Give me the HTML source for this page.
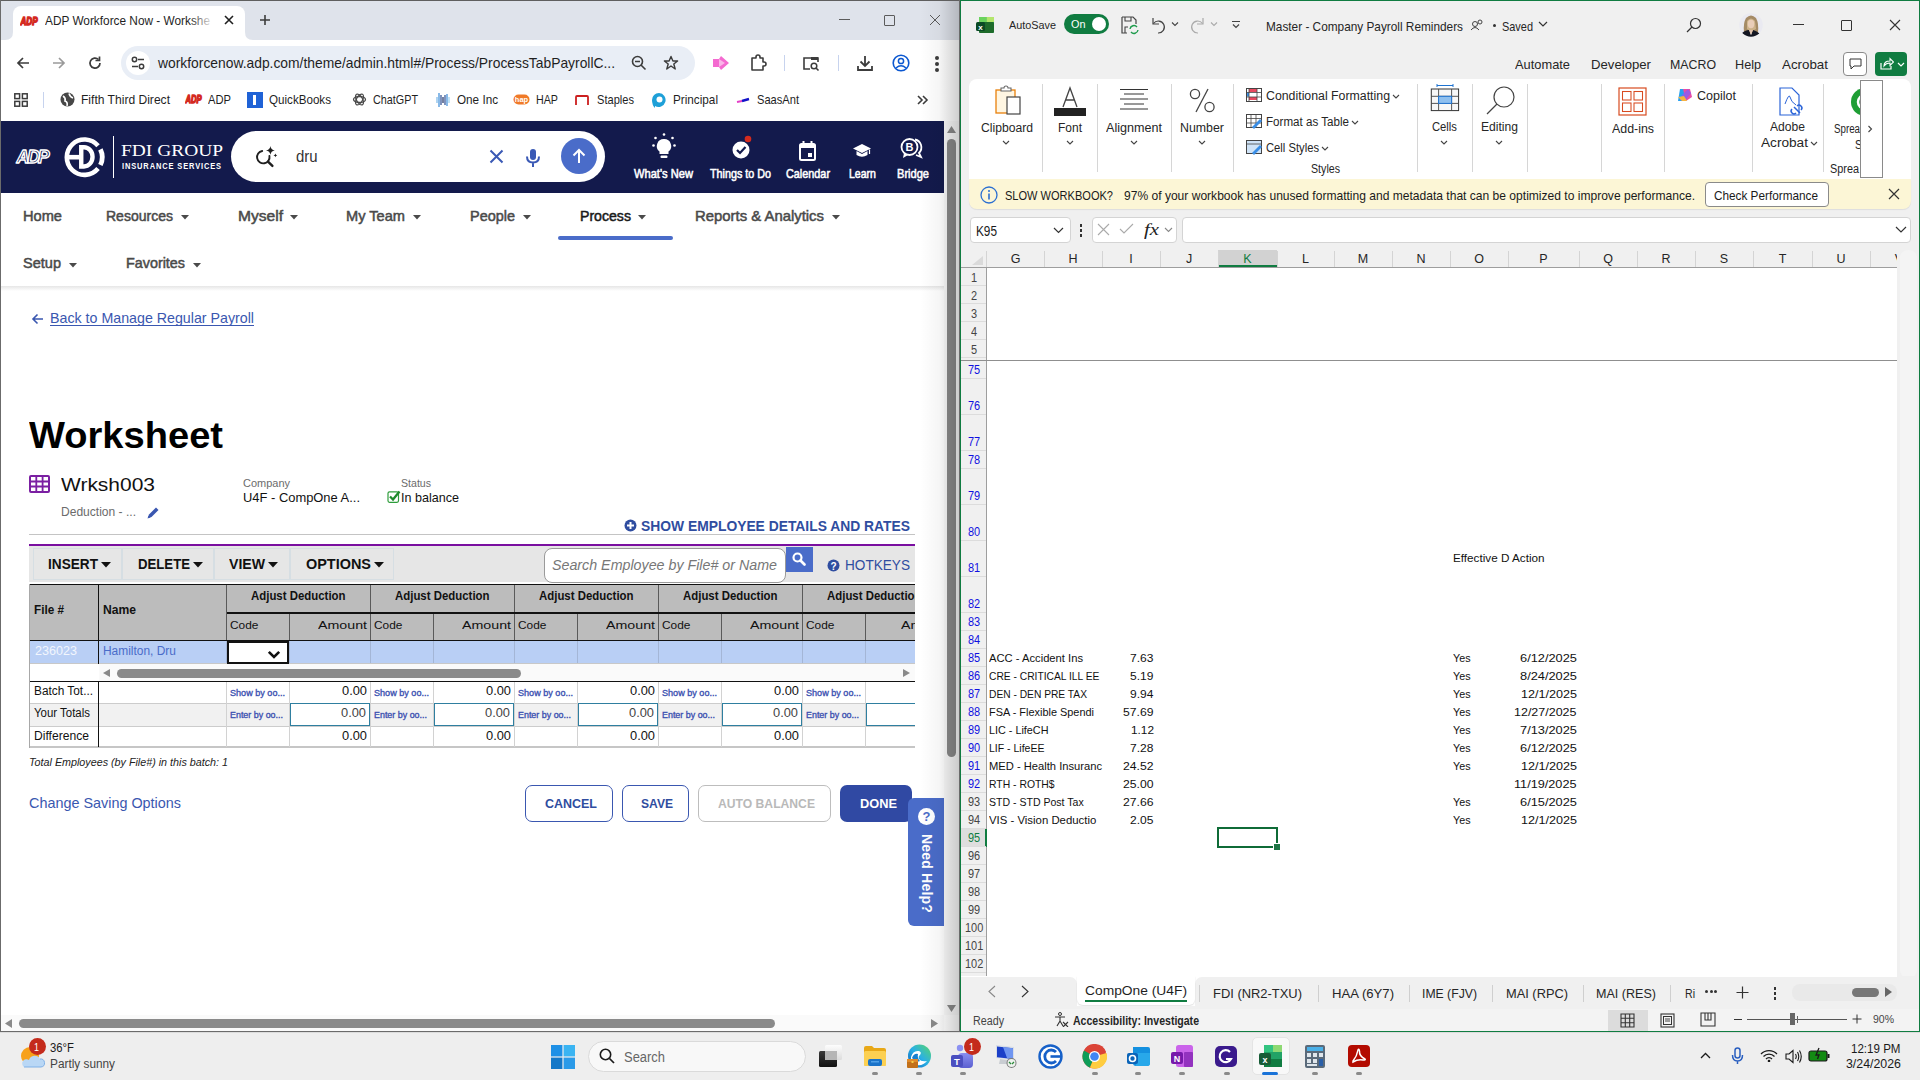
<!DOCTYPE html><html><head><meta charset="utf-8"><style>*{margin:0;padding:0;box-sizing:border-box}
html,body{width:1920px;height:1080px;overflow:hidden;background:#eeeeee;font-family:'Liberation Sans',sans-serif}
.t{position:absolute;white-space:nowrap;line-height:1;transform-origin:0 0}
.b{position:absolute}
</style></head><body><div class="b" style="left:0px;top:0px;width:960px;height:1032px;background:#fff;"></div><div class="b" style="left:0px;top:0px;width:960px;height:40px;background:#dfe3eb;"></div><div class="b" style="left:13px;top:6px;width:232px;height:34px;background:#fff;border-radius:8px 8px 0 0;"></div><svg class="b" style="left:5px;top:32px;" width="8" height="8" viewBox="0 0 8 8"><path d="M0 8 Q8 8 8 0 L8 8 Z" fill="#fff"/></svg><svg class="b" style="left:245px;top:32px;" width="8" height="8" viewBox="0 0 8 8"><path d="M8 8 Q0 8 0 0 L0 8 Z" fill="#fff"/></svg><div class="b" style="left:0px;top:40px;width:960px;height:81px;background:#fff;"></div><div class="b" style="left:121px;top:46px;width:574px;height:34px;background:#e9eef6;border-radius:17px;"></div><div class="b" style="left:126px;top:51px;width:24px;height:24px;background:#fff;border-radius:12px;"></div><svg class="b" style="left:20px;top:14px;" width="19" height="12" viewBox="0 0 19 12"><text x="0.5" y="10.5" font-size="11.5" font-weight="700" font-style="italic" font-family="Liberation Sans" fill="#fff" stroke="#d42a1f" stroke-width="1.6" stroke-linejoin="round" textLength="17" lengthAdjust="spacingAndGlyphs">ADP</text></svg><div class="t" style="left:45.00px;top:13.95px;font-size:13.00px;color:#1f1f1f;transform:scaleX(0.9100);">ADP Workforce Now - Workshe</div><div class="b" style="left:190px;top:10px;width:30px;height:20px;background:linear-gradient(90deg,rgba(255,255,255,0),#fff 80%);"></div><svg class="b" style="left:223px;top:14px;" width="12" height="12" viewBox="0 0 12 12"><path d="M2 2L10 10M10 2L2 10" stroke="#1f1f1f" stroke-width="1.6"/></svg><svg class="b" style="left:259px;top:14px;" width="12" height="12" viewBox="0 0 12 12"><path d="M6 1V11M1 6H11" stroke="#3c3c3c" stroke-width="1.6"/></svg><div class="b" style="left:839px;top:19px;width:11px;height:1px;background:#5b5b5b;"></div><div class="b" style="left:884px;top:15px;width:11px;height:11px;border:1px solid #5b5b5b;border-radius:1px;"></div><svg class="b" style="left:929px;top:14px;" width="12" height="12" viewBox="0 0 12 12"><path d="M1 1L11 11M11 1L1 11" stroke="#5b5b5b" stroke-width="1"/></svg><svg class="b" style="left:16px;top:56px;" width="14" height="14" viewBox="0 0 14 14"><path d="M13 7H2M7 2L2 7L7 12" stroke="#3c3c3c" stroke-width="1.7" fill="none"/></svg><svg class="b" style="left:52px;top:56px;" width="14" height="14" viewBox="0 0 14 14"><path d="M1 7H12M7 2L12 7L7 12" stroke="#9a9a9a" stroke-width="1.7" fill="none"/></svg><svg class="b" style="left:88px;top:56px;" width="14" height="14" viewBox="0 0 14 14"><path d="M12 7A5 5 0 1 1 10.5 3.5" stroke="#3c3c3c" stroke-width="1.7" fill="none"/><path d="M11.5 0.5V4.5H7.5" stroke="#3c3c3c" stroke-width="1.7" fill="none"/></svg><svg class="b" style="left:131px;top:56px;" width="14" height="14" viewBox="0 0 14 14"><circle cx="3.5" cy="3.5" r="2.2" stroke="#3c3c3c" stroke-width="1.5" fill="none"/><path d="M7 3.5H13M1 10.5H7" stroke="#3c3c3c" stroke-width="1.5"/><circle cx="10.5" cy="10.5" r="2.2" stroke="#3c3c3c" stroke-width="1.5" fill="none"/></svg><div class="t" style="left:158.00px;top:55.67px;font-size:14.50px;color:#1f1f1f;transform:scaleX(0.9547);">workforcenow.adp.com/theme/admin.html#/Process/ProcessTabPayrollC...</div><svg class="b" style="left:631px;top:55px;" width="16" height="16" viewBox="0 0 16 16"><circle cx="6.5" cy="6.5" r="5" stroke="#3c3c3c" stroke-width="1.6" fill="none"/><path d="M10 10L14.5 14.5M4 6.5H9" stroke="#3c3c3c" stroke-width="1.6"/></svg><svg class="b" style="left:663px;top:55px;" width="16" height="16" viewBox="0 0 16 16"><path d="M8 1.5L9.9 6H14.6L10.8 9L12.2 14L8 11L3.8 14L5.2 9L1.4 6H6.1Z" stroke="#3c3c3c" stroke-width="1.4" fill="none" stroke-linejoin="round"/></svg><svg class="b" style="left:712px;top:55px;" width="18" height="16" viewBox="0 0 18 16"><path d="M1 4H7L9 1L17 8L9 15L7 12H1Z" fill="#f46ad0"/><path d="M7 4L13 8L7 12Z" fill="#fff" opacity="0.5"/></svg><svg class="b" style="left:749px;top:54px;" width="18" height="18" viewBox="0 0 18 18"><path d="M3 4H7V3A2 2 0 0 1 11 3V4H14V8H15A2 2 0 0 1 15 12H14V16H3Z" stroke="#3c3c3c" stroke-width="1.6" fill="none" stroke-linejoin="round"/></svg><div class="b" style="left:784px;top:55px;width:1px;height:16px;background:#c7d3ee;"></div><svg class="b" style="left:802px;top:55px;" width="18" height="17" viewBox="0 0 18 17"><path d="M8 14H2V3H16V7" stroke="#3c3c3c" stroke-width="1.6" fill="none"/><rect x="9" y="2" width="7" height="3" fill="#3c3c3c"/><circle cx="12" cy="11" r="2.8" stroke="#3c3c3c" stroke-width="1.5" fill="none"/><path d="M14 13L16.5 15.5" stroke="#3c3c3c" stroke-width="1.6"/></svg><div class="b" style="left:838px;top:55px;width:1px;height:16px;background:#c7d3ee;"></div><svg class="b" style="left:856px;top:54px;" width="18" height="18" viewBox="0 0 18 18"><path d="M9 2V12M4.5 7.5L9 12L13.5 7.5M2 12V16H16V12" stroke="#3c3c3c" stroke-width="1.8" fill="none"/></svg><svg class="b" style="left:892px;top:54px;" width="18" height="18" viewBox="0 0 18 18"><circle cx="9" cy="9" r="7.8" stroke="#0b57d0" stroke-width="1.6" fill="none"/><circle cx="9" cy="7" r="2.6" stroke="#0b57d0" stroke-width="1.5" fill="none"/><path d="M4 14Q9 9.5 14 14" stroke="#0b57d0" stroke-width="1.5" fill="none"/></svg><div class="b" style="left:935px;top:56px;width:4px;height:4px;background:#3c3c3c;border-radius:2px;"></div><div class="b" style="left:935px;top:62px;width:4px;height:4px;background:#3c3c3c;border-radius:2px;"></div><div class="b" style="left:935px;top:68px;width:4px;height:4px;background:#3c3c3c;border-radius:2px;"></div><svg class="b" style="left:14px;top:93px;" width="14" height="14" viewBox="0 0 14 14"><rect x="0.8" y="0.8" width="4.8" height="4.8" stroke="#3c3c3c" stroke-width="1.5" fill="none"/><rect x="8.4" y="0.8" width="4.8" height="4.8" stroke="#3c3c3c" stroke-width="1.5" fill="none"/><rect x="0.8" y="8.4" width="4.8" height="4.8" stroke="#3c3c3c" stroke-width="1.5" fill="none"/><rect x="8.4" y="8.4" width="4.8" height="4.8" stroke="#3c3c3c" stroke-width="1.5" fill="none"/></svg><div class="b" style="left:43px;top:92px;width:1px;height:16px;background:#c7d3ee;"></div><svg class="b" style="left:60px;top:92px;" width="15" height="15" viewBox="0 0 15 15"><circle cx="7.5" cy="7.5" r="7" fill="#474747"/><path d="M3 4Q6 6 5 9Q8 10 7 14" stroke="#fff" stroke-width="1.6" fill="none"/><path d="M9 1.5Q10 5 13 6" stroke="#fff" stroke-width="1.6" fill="none"/></svg><div class="t" style="left:81.00px;top:93.15px;font-size:13.00px;color:#1f1f1f;transform:scaleX(0.9286);">Fifth Third Direct</div><svg class="b" style="left:185px;top:93px;" width="18" height="12" viewBox="0 0 18 12"><text x="0.5" y="10" font-size="10.5" font-weight="700" font-style="italic" font-family="Liberation Sans" fill="#fff" stroke="#d42a1f" stroke-width="1.5" stroke-linejoin="round" textLength="16" lengthAdjust="spacingAndGlyphs">ADP</text></svg><div class="t" style="left:208.00px;top:93.15px;font-size:13.00px;color:#1f1f1f;transform:scaleX(0.8603);">ADP</div><div class="b" style="left:247px;top:92px;width:16px;height:16px;background:#1f62d6;"></div><div class="b" style="left:253px;top:95px;width:3px;height:10px;background:#fff;"></div><div class="t" style="left:269.00px;top:93.15px;font-size:13.00px;color:#1f1f1f;transform:scaleX(0.8937);">QuickBooks</div><svg class="b" style="left:352px;top:92px;" width="15" height="15" viewBox="0 0 15 15"><g stroke="#4a4a4a" stroke-width="1.3" fill="none"><ellipse cx="7.5" cy="7.5" rx="6" ry="3"/><ellipse cx="7.5" cy="7.5" rx="6" ry="3" transform="rotate(60 7.5 7.5)"/><ellipse cx="7.5" cy="7.5" rx="6" ry="3" transform="rotate(120 7.5 7.5)"/></g></svg><div class="t" style="left:373.00px;top:93.15px;font-size:13.00px;color:#1f1f1f;transform:scaleX(0.8304);">ChatGPT</div><svg class="b" style="left:435px;top:91px;" width="16" height="18" viewBox="0 0 16 18"><g stroke-width="1.2"><path d="M2 6V12" stroke="#7ab8e8"/><path d="M4 2V16" stroke="#3a8ad8"/><path d="M6 4V14" stroke="#2a4a90"/><path d="M8 6V12" stroke="#1a2a60"/><path d="M10 4V14" stroke="#2a4a90"/><path d="M12 3V15" stroke="#3a8ad8"/><path d="M14 6V12" stroke="#9ad0f0"/></g></svg><div class="t" style="left:457.00px;top:93.15px;font-size:13.00px;color:#1f1f1f;transform:scaleX(0.9005);">One Inc</div><svg class="b" style="left:513px;top:94px;" width="17" height="11" viewBox="0 0 17 11"><rect x="0.5" y="0.5" width="16" height="10" rx="5" fill="#f07a28"/><text x="8.5" y="8" font-size="7.5" font-weight="700" text-anchor="middle" fill="#fff" font-family="Liberation Sans">hap</text></svg><div class="t" style="left:536.00px;top:93.15px;font-size:13.00px;color:#1f1f1f;transform:scaleX(0.8229);">HAP</div><svg class="b" style="left:574px;top:94px;" width="16" height="12" viewBox="0 0 16 12"><path d="M2 11V3Q2 2 3 2H13Q14 2 14 3V11" stroke="#cc1f1f" stroke-width="1.8" fill="none"/></svg><div class="t" style="left:597.00px;top:93.15px;font-size:13.00px;color:#1f1f1f;transform:scaleX(0.8530);">Staples</div><svg class="b" style="left:651px;top:92px;" width="16" height="17" viewBox="0 0 16 17"><path d="M8 1A7 7 0 1 1 4 14V16Q1 13 1 8A7 7 0 0 1 8 1Z" fill="#1ea0d8"/><circle cx="8.5" cy="7.5" r="3" fill="#fff"/></svg><div class="t" style="left:673.00px;top:93.15px;font-size:13.00px;color:#1f1f1f;transform:scaleX(0.9025);">Principal</div><svg class="b" style="left:736px;top:95px;" width="14" height="8" viewBox="0 0 14 8"><path d="M1 7L6 6" stroke="#e33fc7" stroke-width="2"/><path d="M6 6L13 4" stroke="#1212c8" stroke-width="2.4"/></svg><div class="t" style="left:757.00px;top:93.15px;font-size:13.00px;color:#1f1f1f;transform:scaleX(0.8544);">SaasAnt</div><svg class="b" style="left:916px;top:94px;" width="14" height="12" viewBox="0 0 14 12"><path d="M2 2L6 6L2 10M7 2L11 6L7 10" stroke="#3c3c3c" stroke-width="1.6" fill="none"/></svg><div class="b" style="left:1px;top:121px;width:943px;height:72px;background:#131a4c;"></div><svg class="b" style="left:15px;top:146px;" width="36" height="20" viewBox="0 0 36 20"><text x="1.5" y="17.3" font-size="19" font-weight="700" font-style="italic" font-family="Liberation Sans" fill="#131a4c" stroke="#fff" stroke-width="1.5" stroke-linejoin="round" letter-spacing="-2.2" textLength="31" lengthAdjust="spacingAndGlyphs">ADP</text></svg><svg class="b" style="left:63px;top:135px;" width="46" height="46" viewBox="0 0 46 46"><path d="M35.06 10.82A17.7 17.7 0 1 0 35.06 33.58" stroke="#fff" stroke-width="4.6" fill="none"/><path d="M37.4 14.4A17.7 17.7 0 0 1 37.4 30" stroke="#fff" stroke-width="4.8" fill="none"/><path d="M6 22.2H20" stroke="#fff" stroke-width="4.6"/><path d="M18.25 12.25H21A8.55 9.6 0 0 1 21 31.45H18.25Z" stroke="#fff" stroke-width="4.4" fill="none"/></svg><div class="b" style="left:113px;top:136px;width:1px;height:42px;background:#fff;"></div><div class="t" style="left:121.00px;top:142.47px;font-size:17.50px;color:#fff;font-family:'Liberation Serif',serif;transform:scaleX(1.1098);">FDI GROUP</div><div class="t" style="left:122.00px;top:162.28px;font-size:8.50px;color:#fff;font-weight:700;letter-spacing:1px;transform:scaleX(0.8792);">INSURANCE SERVICES</div><div class="b" style="left:231px;top:131px;width:374px;height:51px;background:#fff;border-radius:26px;"></div><svg class="b" style="left:255px;top:146px;" width="24" height="23" viewBox="0 0 24 23"><path d="M7.2 4.95A6.25 6.25 0 1 0 14.45 10" stroke="#1f1f1f" stroke-width="1.9" fill="none" stroke-linecap="round"/><path d="M13 15.6L17.4 19.9" stroke="#1f1f1f" stroke-width="2.4" stroke-linecap="round"/><path d="M15.4 0Q15.9 3.9 19.8 4.4Q15.9 4.9 15.4 8.8Q14.9 4.9 11 4.4Q14.9 3.9 15.4 0Z" fill="#1f1f1f"/><path d="M20.4 7.5Q20.6 9.2 22.3 9.4Q20.6 9.6 20.4 11.3Q20.2 9.6 18.5 9.4Q20.2 9.2 20.4 7.5Z" fill="#1f1f1f"/></svg><div class="t" style="left:296.30px;top:148.82px;font-size:16.80px;color:#333;transform:scaleX(0.8901);">dru</div><svg class="b" style="left:489px;top:149px;" width="15" height="15" viewBox="0 0 15 15"><path d="M1.5 1.5L13.5 13.5M13.5 1.5L1.5 13.5" stroke="#3a59b5" stroke-width="2"/></svg><svg class="b" style="left:525px;top:148px;" width="16" height="20" viewBox="0 0 16 20"><rect x="5" y="1" width="6" height="11" rx="3" fill="#3a59b5"/><path d="M2 8.5Q2 14.5 8 14.5Q14 14.5 14 8.5M8 14.5V19" stroke="#3a59b5" stroke-width="2" fill="none"/></svg><div class="b" style="left:561px;top:138px;width:36px;height:36px;background:#4a6cc9;border-radius:18px;"></div><svg class="b" style="left:570px;top:147px;" width="18" height="18" viewBox="0 0 18 18"><path d="M9 16V3M3.5 8.5L9 3L14.5 8.5" stroke="#fff" stroke-width="2" fill="none"/></svg><svg class="b" style="left:652px;top:133px;" width="24" height="27" viewBox="0 0 24 27"><path d="M12 6A7 7 0 0 0 7.5 18.5V21H16.5V18.5A7 7 0 0 0 12 6Z" fill="#fff"/><rect x="8.5" y="22.5" width="7" height="2.5" rx="1" fill="#fff"/><circle cx="12" cy="1.5" r="1.3" fill="#fff"/><circle cx="3.5" cy="5" r="1.3" fill="#fff"/><circle cx="20.5" cy="5" r="1.3" fill="#fff"/><circle cx="1.5" cy="12.5" r="1.3" fill="#fff"/><circle cx="22.5" cy="12.5" r="1.3" fill="#fff"/></svg><svg class="b" style="left:731px;top:135px;" width="22" height="24" viewBox="0 0 22 24"><circle cx="10" cy="15" r="8.5" fill="#fff"/><path d="M6 15L9 18L14.5 12" stroke="#131a4c" stroke-width="2.2" fill="none"/><circle cx="17" cy="4" r="3.3" fill="#d42b1e"/></svg><svg class="b" style="left:799px;top:141px;" width="17" height="20" viewBox="0 0 17 20"><rect x="1" y="3" width="15" height="16" rx="1.5" stroke="#fff" stroke-width="2" fill="none"/><rect x="1" y="3" width="15" height="4" fill="#fff"/><path d="M4.5 0V4M12.5 0V4" stroke="#fff" stroke-width="2"/><rect x="9" y="12" width="4" height="4" fill="#fff"/></svg><svg class="b" style="left:853px;top:143px;" width="18" height="15" viewBox="0 0 18 15"><path d="M9 1L18 5.5L9 10L0 5.5Z" fill="#fff"/><path d="M3.5 8V12Q9 15.5 14.5 12V8L9 11Z" fill="#fff"/><path d="M16.5 6.5V11" stroke="#fff" stroke-width="1.2"/></svg><svg class="b" style="left:900px;top:137px;" width="24" height="24" viewBox="0 0 24 24"><circle cx="9.5" cy="10" r="8" stroke="#fff" stroke-width="1.8" fill="none"/><path d="M4 16L3 21L8 18" fill="#fff"/><path d="M15 2.5A8 8 0 0 1 19 16L21 20L16 18" stroke="#fff" stroke-width="1.8" fill="none"/><text x="9.5" y="14" font-size="11" font-weight="700" text-anchor="middle" fill="#fff" font-family="Liberation Sans">B</text></svg><div class="t" style="left:634.00px;top:167.88px;font-size:12.50px;color:#fff;-webkit-text-stroke:0.55px #fff;transform:scaleX(0.8899);">What&#x27;s New</div><div class="t" style="left:710.00px;top:168.38px;font-size:12.50px;color:#fff;-webkit-text-stroke:0.55px #fff;transform:scaleX(0.8607);">Things to Do</div><div class="t" style="left:786.00px;top:168.38px;font-size:12.50px;color:#fff;-webkit-text-stroke:0.55px #fff;transform:scaleX(0.8673);">Calendar</div><div class="t" style="left:849.00px;top:168.38px;font-size:12.50px;color:#fff;-webkit-text-stroke:0.55px #fff;transform:scaleX(0.8442);">Learn</div><div class="t" style="left:897.00px;top:168.38px;font-size:12.50px;color:#fff;-webkit-text-stroke:0.55px #fff;transform:scaleX(0.8854);">Bridge</div><div class="t" style="left:23.00px;top:208.68px;font-size:14.50px;color:#4a4a4a;-webkit-text-stroke:0.5px #4a4a4a;transform:scaleX(1.0081);">Home</div><div class="t" style="left:106.00px;top:208.68px;font-size:14.50px;color:#4a4a4a;-webkit-text-stroke:0.5px #4a4a4a;transform:scaleX(0.9666);">Resources</div><svg class="b" style="left:181px;top:215px;" width="8" height="5" viewBox="0 0 8 5"><path d="M0 0H8L4 4.5Z" fill="#4a4a4a"/></svg><div class="t" style="left:238.00px;top:208.68px;font-size:14.50px;color:#4a4a4a;-webkit-text-stroke:0.5px #4a4a4a;transform:scaleX(1.0738);">Myself</div><svg class="b" style="left:290px;top:215px;" width="8" height="5" viewBox="0 0 8 5"><path d="M0 0H8L4 4.5Z" fill="#4a4a4a"/></svg><div class="t" style="left:346.00px;top:208.68px;font-size:14.50px;color:#4a4a4a;-webkit-text-stroke:0.5px #4a4a4a;transform:scaleX(1.0075);">My Team</div><svg class="b" style="left:413px;top:215px;" width="8" height="5" viewBox="0 0 8 5"><path d="M0 0H8L4 4.5Z" fill="#4a4a4a"/></svg><div class="t" style="left:470.00px;top:208.68px;font-size:14.50px;color:#4a4a4a;-webkit-text-stroke:0.5px #4a4a4a;transform:scaleX(0.9965);">People</div><svg class="b" style="left:523px;top:215px;" width="8" height="5" viewBox="0 0 8 5"><path d="M0 0H8L4 4.5Z" fill="#4a4a4a"/></svg><div class="t" style="left:580.00px;top:208.68px;font-size:14.50px;color:#1a1a1a;-webkit-text-stroke:0.5px #1a1a1a;transform:scaleX(0.9735);">Process</div><svg class="b" style="left:638px;top:215px;" width="8" height="5" viewBox="0 0 8 5"><path d="M0 0H8L4 4.5Z" fill="#4a4a4a"/></svg><div class="b" style="left:558px;top:236px;width:115px;height:4px;background:#4a6cc9;border-radius:2px;"></div><div class="t" style="left:695.00px;top:208.68px;font-size:14.50px;color:#4a4a4a;-webkit-text-stroke:0.5px #4a4a4a;transform:scaleX(1.0260);">Reports &amp; Analytics</div><svg class="b" style="left:832px;top:215px;" width="8" height="5" viewBox="0 0 8 5"><path d="M0 0H8L4 4.5Z" fill="#4a4a4a"/></svg><div class="t" style="left:23.00px;top:255.98px;font-size:14.50px;color:#4a4a4a;-webkit-text-stroke:0.5px #4a4a4a;transform:scaleX(1.0025);">Setup</div><svg class="b" style="left:69px;top:263px;" width="8" height="5" viewBox="0 0 8 5"><path d="M0 0H8L4 4.5Z" fill="#4a4a4a"/></svg><div class="t" style="left:126.00px;top:255.98px;font-size:14.50px;color:#4a4a4a;-webkit-text-stroke:0.5px #4a4a4a;transform:scaleX(0.9893);">Favorites</div><svg class="b" style="left:193px;top:263px;" width="8" height="5" viewBox="0 0 8 5"><path d="M0 0H8L4 4.5Z" fill="#4a4a4a"/></svg><div class="b" style="left:1px;top:286px;width:943px;height:5px;background:linear-gradient(#e6e6e6,rgba(255,255,255,0));"></div><svg class="b" style="left:31px;top:313px;" width="13" height="12" viewBox="0 0 13 12"><path d="M12 6H2M6.5 1.5L2 6L6.5 10.5" stroke="#3a57b0" stroke-width="1.6" fill="none"/></svg><div class="t" style="left:50.00px;top:311.28px;font-size:14.50px;color:#3a57b0;transform:scaleX(0.9810);">Back to Manage Regular Payroll</div><div class="b" style="left:50px;top:325px;width:204px;height:1px;background:#3a57b0;"></div><div class="t" style="left:29.00px;top:417.43px;font-size:37.50px;color:#000;font-weight:700;transform:scaleX(1.0155);">Worksheet</div><svg class="b" style="left:29px;top:475px;" width="21" height="18" viewBox="0 0 21 18"><rect x="1" y="1" width="19" height="16" rx="1" stroke="#7b1fa2" stroke-width="2" fill="none"/><path d="M1 6.5H20M1 11.5H20M7.3 1V17M13.6 1V17" stroke="#7b1fa2" stroke-width="1.8"/></svg><div class="t" style="left:61.00px;top:474.65px;font-size:19.00px;color:#111;transform:scaleX(1.1034);">Wrksh003</div><div class="t" style="left:61.00px;top:506.38px;font-size:12.50px;color:#6b6b6b;transform:scaleX(0.9637);">Deduction - ...</div><svg class="b" style="left:146px;top:506px;" width="14" height="14" viewBox="0 0 14 14"><path d="M2 12L3 8.5L10 1.5L12.5 4L5.5 11Z" fill="#3a57b0"/><path d="M1.5 12.5L2.5 9.5L4.5 11.5Z" fill="#3a57b0"/></svg><div class="t" style="left:243.00px;top:477.85px;font-size:11.00px;color:#6b6b6b;transform:scaleX(0.9983);">Company</div><div class="t" style="left:243.00px;top:490.72px;font-size:13.50px;color:#111;transform:scaleX(0.9567);">U4F - CompOne A...</div><div class="t" style="left:401.00px;top:477.85px;font-size:11.00px;color:#6b6b6b;transform:scaleX(0.9619);">Status</div><svg class="b" style="left:387px;top:490px;" width="14" height="14" viewBox="0 0 14 14"><rect x="1" y="1.8" width="10.5" height="10.5" rx="1.5" stroke="#2e9d3b" stroke-width="1.2" fill="none"/><path d="M3 6.5L6 9.5L12.5 1.5" stroke="#1f8a2c" stroke-width="2.3" fill="none"/></svg><div class="t" style="left:401.00px;top:490.72px;font-size:13.50px;color:#111;transform:scaleX(0.9308);">In balance</div><svg class="b" style="left:624px;top:519px;" width="13" height="13" viewBox="0 0 13 13"><circle cx="6.5" cy="6.5" r="6" fill="#2f4da0"/><path d="M6.5 3V10M3 6.5H10" stroke="#fff" stroke-width="2"/></svg><div class="t" style="left:641.00px;top:519.10px;font-size:14.00px;color:#2f4da0;font-weight:700;transform:scaleX(0.9890);">SHOW EMPLOYEE DETAILS AND RATES</div><div class="b" style="left:29px;top:534px;width:886px;height:1px;background:#c4c4c4;"></div><div class="b" style="left:29px;top:544px;width:886px;height:2px;background:#7a0fa0;"></div><div class="b" style="left:29px;top:546px;width:886px;height:36px;background:#e6e6e6;"></div><div class="b" style="left:33px;top:548px;width:89px;height:32px;border:1px solid #d6dee3;"></div><div class="b" style="left:122px;top:548px;width:92px;height:32px;border:1px solid #d6dee3;"></div><div class="b" style="left:214px;top:548px;width:76px;height:32px;border:1px solid #d6dee3;"></div><div class="b" style="left:290px;top:548px;width:104px;height:32px;border:1px solid #d6dee3;"></div><div class="t" style="left:48.00px;top:557.10px;font-size:14.00px;color:#111;font-weight:700;transform:scaleX(0.9738);">INSERT</div><svg class="b" style="left:101px;top:562px;" width="10" height="6" viewBox="0 0 10 6"><path d="M0 0H10L5 5.5Z" fill="#111"/></svg><div class="t" style="left:138.00px;top:557.10px;font-size:14.00px;color:#111;font-weight:700;transform:scaleX(0.9414);">DELETE</div><svg class="b" style="left:193px;top:562px;" width="10" height="6" viewBox="0 0 10 6"><path d="M0 0H10L5 5.5Z" fill="#111"/></svg><div class="t" style="left:229.00px;top:557.10px;font-size:14.00px;color:#111;font-weight:700;transform:scaleX(1.0061);">VIEW</div><svg class="b" style="left:268px;top:562px;" width="10" height="6" viewBox="0 0 10 6"><path d="M0 0H10L5 5.5Z" fill="#111"/></svg><div class="t" style="left:306.00px;top:557.10px;font-size:14.00px;color:#111;font-weight:700;transform:scaleX(1.0315);">OPTIONS</div><svg class="b" style="left:374px;top:562px;" width="10" height="6" viewBox="0 0 10 6"><path d="M0 0H10L5 5.5Z" fill="#111"/></svg><div class="b" style="left:544px;top:548px;width:242px;height:35px;background:#fff;border:1px solid #9a9a9a;border-radius:8px;"></div><div class="t" style="left:552.00px;top:557.67px;font-size:14.50px;color:#777;font-style:italic;transform:scaleX(0.9830);">Search Employee by File# or Name</div><div class="b" style="left:786px;top:547px;width:27px;height:25px;background:#4a6cc9;"></div><svg class="b" style="left:792px;top:552px;" width="14" height="14" viewBox="0 0 14 14"><circle cx="5.5" cy="5.5" r="4" stroke="#fff" stroke-width="2.2" fill="none"/><path d="M8.5 8.5L12.5 12.5" stroke="#fff" stroke-width="2.6" stroke-linecap="round"/></svg><svg class="b" style="left:827px;top:559px;" width="13" height="13" viewBox="0 0 13 13"><circle cx="6.5" cy="6.5" r="6" fill="#2f4da0"/><text x="6.5" y="10.5" font-size="10" font-weight="700" text-anchor="middle" fill="#fff" font-family="Liberation Sans">?</text></svg><div class="t" style="left:845.00px;top:558.10px;font-size:14.00px;color:#2f4da0;transform:scaleX(0.9715);">HOTKEYS</div><div class="b" style="left:0;top:0;width:960px;height:1032px;clip-path:inset(575px 45px 280px 0)"><div class="b" style="left:30px;top:585px;width:885px;height:55px;background:#bcbcbc;"></div><div class="b" style="left:30px;top:584px;width:885px;height:1px;background:#111;"></div><div class="b" style="left:226px;top:585px;width:1px;height:55px;background:#5a5a5a;"></div><div class="b" style="left:370px;top:585px;width:1px;height:55px;background:#5a5a5a;"></div><div class="b" style="left:514px;top:585px;width:1px;height:55px;background:#5a5a5a;"></div><div class="b" style="left:658px;top:585px;width:1px;height:55px;background:#5a5a5a;"></div><div class="b" style="left:802px;top:585px;width:1px;height:55px;background:#5a5a5a;"></div><div class="b" style="left:227px;top:612px;width:688px;height:2px;background:#111;"></div><div class="b" style="left:289px;top:614px;width:1px;height:26px;background:#5a5a5a;"></div><div class="b" style="left:433px;top:614px;width:1px;height:26px;background:#5a5a5a;"></div><div class="b" style="left:577px;top:614px;width:1px;height:26px;background:#5a5a5a;"></div><div class="b" style="left:721px;top:614px;width:1px;height:26px;background:#5a5a5a;"></div><div class="b" style="left:865px;top:614px;width:1px;height:26px;background:#5a5a5a;"></div><div class="b" style="left:30px;top:640px;width:885px;height:1px;background:#111;"></div><div class="t" style="left:34.00px;top:603.98px;font-size:12.50px;color:#111;font-weight:700;transform:scaleX(0.9384);">File #</div><div class="t" style="left:103.00px;top:603.98px;font-size:12.50px;color:#111;font-weight:700;transform:scaleX(0.9693);">Name</div><div class="t" style="left:251.00px;top:588.95px;font-size:13.00px;color:#111;font-weight:700;transform:scaleX(0.8782);">Adjust Deduction</div><div class="t" style="left:229.60px;top:619.52px;font-size:11.50px;color:#111;transform:scaleX(1.0327);">Code</div><div class="t" style="left:366.80px;top:619.52px;font-size:11.50px;color:#111;transform:scaleX(1.2361);left:317.80px;">Amount</div><div class="t" style="left:395.00px;top:588.95px;font-size:13.00px;color:#111;font-weight:700;transform:scaleX(0.8782);">Adjust Deduction</div><div class="t" style="left:373.60px;top:619.52px;font-size:11.50px;color:#111;transform:scaleX(1.0327);">Code</div><div class="t" style="left:510.80px;top:619.52px;font-size:11.50px;color:#111;transform:scaleX(1.2361);left:461.80px;">Amount</div><div class="t" style="left:539.00px;top:588.95px;font-size:13.00px;color:#111;font-weight:700;transform:scaleX(0.8782);">Adjust Deduction</div><div class="t" style="left:517.60px;top:619.52px;font-size:11.50px;color:#111;transform:scaleX(1.0327);">Code</div><div class="t" style="left:654.80px;top:619.52px;font-size:11.50px;color:#111;transform:scaleX(1.2361);left:605.80px;">Amount</div><div class="t" style="left:683.00px;top:588.95px;font-size:13.00px;color:#111;font-weight:700;transform:scaleX(0.8782);">Adjust Deduction</div><div class="t" style="left:661.60px;top:619.52px;font-size:11.50px;color:#111;transform:scaleX(1.0327);">Code</div><div class="t" style="left:798.80px;top:619.52px;font-size:11.50px;color:#111;transform:scaleX(1.2361);left:749.80px;">Amount</div><div class="t" style="left:827.00px;top:588.95px;font-size:13.00px;color:#111;font-weight:700;transform:scaleX(0.8782);">Adjust Deduction</div><div class="t" style="left:805.60px;top:619.52px;font-size:11.50px;color:#111;transform:scaleX(1.0327);">Code</div><div class="t" style="left:950.00px;top:619.52px;font-size:11.50px;color:#111;transform:scaleX(1.2361);left:901.00px;">Amount</div><div class="b" style="left:30px;top:641px;width:885px;height:23px;background:#b9cff5;"></div><div class="b" style="left:226px;top:641px;width:1px;height:23px;background:#a4b6d6;"></div><div class="b" style="left:289px;top:641px;width:1px;height:23px;background:#a4b6d6;"></div><div class="b" style="left:370px;top:641px;width:1px;height:23px;background:#a4b6d6;"></div><div class="b" style="left:433px;top:641px;width:1px;height:23px;background:#a4b6d6;"></div><div class="b" style="left:514px;top:641px;width:1px;height:23px;background:#a4b6d6;"></div><div class="b" style="left:577px;top:641px;width:1px;height:23px;background:#a4b6d6;"></div><div class="b" style="left:658px;top:641px;width:1px;height:23px;background:#a4b6d6;"></div><div class="b" style="left:721px;top:641px;width:1px;height:23px;background:#a4b6d6;"></div><div class="b" style="left:802px;top:641px;width:1px;height:23px;background:#a4b6d6;"></div><div class="b" style="left:865px;top:641px;width:1px;height:23px;background:#a4b6d6;"></div><div class="b" style="left:30px;top:663px;width:885px;height:1px;background:#c8c8c8;"></div><div class="t" style="left:35.00px;top:645.17px;font-size:12.50px;color:#f2f6fd;transform:scaleX(1.0067);">236023</div><div class="t" style="left:103.00px;top:645.17px;font-size:12.50px;color:#4a6cc9;transform:scaleX(0.9552);">Hamilton, Dru</div><div class="b" style="left:227px;top:641px;width:62px;height:23px;background:#fff;border:2px solid #111;"></div><svg class="b" style="left:267px;top:650px;" width="14" height="9" viewBox="0 0 14 9"><path d="M1.8 1.8L7 7L12.2 1.8" stroke="#111" stroke-width="2.6" fill="none"/></svg><div class="b" style="left:30px;top:664px;width:885px;height:17px;background:#fafafa;"></div><div class="b" style="left:30px;top:664px;width:69px;height:17px;background:#fff;"></div><svg class="b" style="left:103px;top:669px;" width="7" height="8" viewBox="0 0 7 8"><path d="M7 0V8L0 4Z" fill="#8a8a8a"/></svg><div class="b" style="left:117px;top:669px;width:404px;height:8.5px;background:#8a8a8a;border-radius:4.5px;"></div><svg class="b" style="left:903px;top:669px;" width="7" height="8" viewBox="0 0 7 8"><path d="M0 0V8L7 4Z" fill="#8a8a8a"/></svg><div class="b" style="left:30px;top:681px;width:885px;height:1px;background:#111;"></div><div class="b" style="left:30px;top:682px;width:885px;height:65px;background:#fff;"></div><div class="b" style="left:30px;top:704px;width:885px;height:22px;background:#f1f1f1;"></div><div class="b" style="left:30px;top:703px;width:885px;height:1px;background:#cccccc;"></div><div class="b" style="left:30px;top:726px;width:885px;height:1px;background:#cccccc;"></div><div class="b" style="left:30px;top:746px;width:885px;height:2px;background:#c6c6c6;"></div><div class="b" style="left:226px;top:682px;width:1px;height:65px;background:#d2d2d2;"></div><div class="b" style="left:289px;top:682px;width:1px;height:65px;background:#d2d2d2;"></div><div class="b" style="left:370px;top:682px;width:1px;height:65px;background:#d2d2d2;"></div><div class="b" style="left:433px;top:682px;width:1px;height:65px;background:#d2d2d2;"></div><div class="b" style="left:514px;top:682px;width:1px;height:65px;background:#d2d2d2;"></div><div class="b" style="left:577px;top:682px;width:1px;height:65px;background:#d2d2d2;"></div><div class="b" style="left:658px;top:682px;width:1px;height:65px;background:#d2d2d2;"></div><div class="b" style="left:721px;top:682px;width:1px;height:65px;background:#d2d2d2;"></div><div class="b" style="left:802px;top:682px;width:1px;height:65px;background:#d2d2d2;"></div><div class="b" style="left:865px;top:682px;width:1px;height:65px;background:#d2d2d2;"></div><div class="t" style="left:34.00px;top:685.17px;font-size:12.50px;color:#111;transform:scaleX(0.9468);">Batch Tot...</div><div class="t" style="left:34.00px;top:706.88px;font-size:12.50px;color:#111;transform:scaleX(0.9155);">Your Totals</div><div class="t" style="left:34.00px;top:730.17px;font-size:12.50px;color:#111;transform:scaleX(0.9692);">Difference</div><div class="t" style="left:230.00px;top:689.53px;font-size:8.20px;color:#3a4fb0;-webkit-text-stroke:0.3px #3a4fb0;transform:scaleX(1.1087);">Show by oo...</div><div class="t" style="left:230.00px;top:711.53px;font-size:8.20px;color:#3a4fb0;-webkit-text-stroke:0.3px #3a4fb0;transform:scaleX(1.0882);">Enter by oo...</div><div class="t" style="left:367.00px;top:684.45px;font-size:13.00px;color:#111;transform:scaleX(0.9877);left:342.00px;">0.00</div><div class="b" style="left:290px;top:703px;width:80px;height:23px;background:#fff;border:1.5px solid #2f7fa0;"></div><div class="t" style="left:366.00px;top:706.45px;font-size:13.00px;color:#444;transform:scaleX(0.9877);left:341.00px;">0.00</div><div class="t" style="left:367.00px;top:728.95px;font-size:13.00px;color:#111;transform:scaleX(0.9877);left:342.00px;">0.00</div><div class="t" style="left:374.00px;top:689.53px;font-size:8.20px;color:#3a4fb0;-webkit-text-stroke:0.3px #3a4fb0;transform:scaleX(1.1087);">Show by oo...</div><div class="t" style="left:374.00px;top:711.53px;font-size:8.20px;color:#3a4fb0;-webkit-text-stroke:0.3px #3a4fb0;transform:scaleX(1.0882);">Enter by oo...</div><div class="t" style="left:511.00px;top:684.45px;font-size:13.00px;color:#111;transform:scaleX(0.9877);left:486.00px;">0.00</div><div class="b" style="left:434px;top:703px;width:80px;height:23px;background:#fff;border:1.5px solid #2f7fa0;"></div><div class="t" style="left:510.00px;top:706.45px;font-size:13.00px;color:#444;transform:scaleX(0.9877);left:485.00px;">0.00</div><div class="t" style="left:511.00px;top:728.95px;font-size:13.00px;color:#111;transform:scaleX(0.9877);left:486.00px;">0.00</div><div class="t" style="left:518.00px;top:689.53px;font-size:8.20px;color:#3a4fb0;-webkit-text-stroke:0.3px #3a4fb0;transform:scaleX(1.1087);">Show by oo...</div><div class="t" style="left:518.00px;top:711.53px;font-size:8.20px;color:#3a4fb0;-webkit-text-stroke:0.3px #3a4fb0;transform:scaleX(1.0882);">Enter by oo...</div><div class="t" style="left:655.00px;top:684.45px;font-size:13.00px;color:#111;transform:scaleX(0.9877);left:630.00px;">0.00</div><div class="b" style="left:578px;top:703px;width:80px;height:23px;background:#fff;border:1.5px solid #2f7fa0;"></div><div class="t" style="left:654.00px;top:706.45px;font-size:13.00px;color:#444;transform:scaleX(0.9877);left:629.00px;">0.00</div><div class="t" style="left:655.00px;top:728.95px;font-size:13.00px;color:#111;transform:scaleX(0.9877);left:630.00px;">0.00</div><div class="t" style="left:662.00px;top:689.53px;font-size:8.20px;color:#3a4fb0;-webkit-text-stroke:0.3px #3a4fb0;transform:scaleX(1.1087);">Show by oo...</div><div class="t" style="left:662.00px;top:711.53px;font-size:8.20px;color:#3a4fb0;-webkit-text-stroke:0.3px #3a4fb0;transform:scaleX(1.0882);">Enter by oo...</div><div class="t" style="left:799.00px;top:684.45px;font-size:13.00px;color:#111;transform:scaleX(0.9877);left:774.00px;">0.00</div><div class="b" style="left:722px;top:703px;width:80px;height:23px;background:#fff;border:1.5px solid #2f7fa0;"></div><div class="t" style="left:798.00px;top:706.45px;font-size:13.00px;color:#444;transform:scaleX(0.9877);left:773.00px;">0.00</div><div class="t" style="left:799.00px;top:728.95px;font-size:13.00px;color:#111;transform:scaleX(0.9877);left:774.00px;">0.00</div><div class="t" style="left:806.00px;top:689.53px;font-size:8.20px;color:#3a4fb0;-webkit-text-stroke:0.3px #3a4fb0;transform:scaleX(1.1087);">Show by oo...</div><div class="t" style="left:806.00px;top:711.53px;font-size:8.20px;color:#3a4fb0;-webkit-text-stroke:0.3px #3a4fb0;transform:scaleX(1.0882);">Enter by oo...</div><div class="b" style="left:866px;top:703px;width:60px;height:23px;background:#fff;border:1.5px solid #2f7fa0;border-right:none;"></div><div class="b" style="left:29px;top:584px;width:1px;height:164px;background:#a8a8a8;"></div><div class="b" style="left:98px;top:584px;width:1px;height:80px;background:#111;"></div><div class="b" style="left:98px;top:681px;width:1px;height:66px;background:#111;"></div></div><div class="t" style="left:29.00px;top:756.65px;font-size:11.00px;color:#222;font-style:italic;transform:scaleX(0.9764);">Total Employees (by File#) in this batch: 1</div><div class="t" style="left:29.00px;top:795.88px;font-size:14.50px;color:#3a57b0;transform:scaleX(0.9925);">Change Saving Options</div><div class="b" style="left:525px;top:785px;width:88px;height:37px;border:1.5px solid #3a57b0;border-radius:7px;background:#fff;"></div><div class="t" style="left:545.00px;top:796.95px;font-size:13.00px;color:#2f4da0;font-weight:700;transform:scaleX(0.9599);">CANCEL</div><div class="b" style="left:622px;top:785px;width:67px;height:37px;border:1.5px solid #3a57b0;border-radius:7px;background:#fff;"></div><div class="t" style="left:641.00px;top:796.95px;font-size:13.00px;color:#2f4da0;font-weight:700;transform:scaleX(0.9292);">SAVE</div><div class="b" style="left:698px;top:785px;width:133px;height:37px;border:1px solid #bdbdbd;border-radius:7px;background:#fff;"></div><div class="t" style="left:718.00px;top:796.95px;font-size:13.00px;color:#b9b9b9;font-weight:700;transform:scaleX(0.9348);">AUTO BALANCE</div><div class="b" style="left:840px;top:785px;width:72px;height:37px;background:#3049a3;border-radius:7px;"></div><div class="t" style="left:860.00px;top:796.95px;font-size:13.00px;color:#fff;font-weight:700;transform:scaleX(0.9850);">DONE</div><div class="b" style="left:908px;top:798px;width:36px;height:128px;background:#4a6cc9;border-radius:6px 0 0 6px;"></div><svg class="b" style="left:917px;top:807px;" width="19" height="19" viewBox="0 0 19 19"><circle cx="9.5" cy="9.5" r="8.5" fill="#fff"/><text x="9.5" y="14" font-size="13" font-weight="700" text-anchor="middle" fill="#4a6cc9" font-family="Liberation Sans">?</text></svg><div class="t" style="left:934px;top:834px;font-size:14px;font-weight:700;color:#fff;transform:rotate(90deg);transform-origin:0 0;letter-spacing:0.2px">Need Help?</div><div class="b" style="left:944px;top:121px;width:15px;height:894px;background:#fafafa;"></div><svg class="b" style="left:947px;top:126px;" width="9" height="7" viewBox="0 0 9 7"><path d="M0 7L4.5 0L9 7Z" fill="#8a8a8a"/></svg><div class="b" style="left:947px;top:139px;width:9px;height:618px;background:#8a8a8a;border-radius:4.5px;"></div><svg class="b" style="left:947px;top:1005px;" width="9" height="7" viewBox="0 0 9 7"><path d="M0 0L4.5 7L9 0Z" fill="#8a8a8a"/></svg><div class="b" style="left:1px;top:1015px;width:943px;height:16px;background:#fafafa;"></div><svg class="b" style="left:5px;top:1019px;" width="7" height="9" viewBox="0 0 7 9"><path d="M7 0V9L0 4.5Z" fill="#8a8a8a"/></svg><div class="b" style="left:19px;top:1019px;width:756px;height:9px;background:#8a8a8a;border-radius:4.5px;"></div><svg class="b" style="left:931px;top:1019px;" width="7" height="9" viewBox="0 0 7 9"><path d="M0 0V9L7 4.5Z" fill="#8a8a8a"/></svg><div class="b" style="left:920px;top:1px;width:39px;height:1030px;background:linear-gradient(90deg,rgba(0,0,0,0),rgba(0,0,0,0.04) 50%,rgba(0,0,0,0.19));"></div><div class="b" style="left:0px;top:0px;width:960px;height:1px;background:#5f5f5f;"></div><div class="b" style="left:0px;top:0px;width:1px;height:1032px;background:#6b6b6b;"></div><div class="b" style="left:959px;top:0px;width:1px;height:1032px;background:#6b6b6b;"></div><div class="b" style="left:0px;top:1031px;width:960px;height:1px;background:#6b6b6b;"></div><div class="b" style="left:960px;top:0px;width:960px;height:1032px;background:#f0f0f0;"></div><svg class="b" style="left:976px;top:17px;" width="18" height="16" viewBox="0 0 18 16"><rect x="3" y="0" width="15" height="16" rx="1.5" fill="#21a366"/><rect x="3" y="0" width="7.5" height="5" fill="#6ad35d"/><rect x="10.5" y="0" width="7.5" height="5" fill="#b4e66d"/><rect x="3" y="5" width="15" height="11" rx="1.5" fill="#1e6b2a"/><rect x="0" y="5" width="9" height="9" rx="1.5" fill="#0b4a25"/><text x="4.5" y="12.5" font-size="8" font-weight="700" text-anchor="middle" fill="#fff" font-family="Liberation Sans">x</text></svg><div class="t" style="left:1009.00px;top:19.57px;font-size:11.80px;color:#262626;transform:scaleX(0.9185);">AutoSave</div><div class="b" style="left:1064px;top:14px;width:45px;height:20px;background:#107c41;border-radius:10px;"></div><div class="t" style="left:1070.50px;top:19.48px;font-size:11.20px;color:#fff;transform:scaleX(0.9707);">On</div><div class="b" style="left:1092px;top:17px;width:14px;height:14px;background:#fff;border-radius:7px;"></div><svg class="b" style="left:1121px;top:16px;" width="19" height="19" viewBox="0 0 19 19"><path d="M1 1H12L15 4V8M1 1V17H6" stroke="#444" stroke-width="1.2" fill="none"/><path d="M4 1V5H10V1M4 17V11H7" stroke="#444" stroke-width="1.1" fill="none"/><path d="M9 13A4 4 0 0 1 16 11M17 14A4 4 0 0 1 10 16" stroke="#1e9b4c" stroke-width="1.4" fill="none"/></svg><svg class="b" style="left:1151px;top:16px;" width="16" height="19" viewBox="0 0 16 19"><path d="M2 2V8H8" stroke="#444" stroke-width="1.2" fill="none"/><path d="M2.5 7.5A6 6 0 1 1 7 17" stroke="#444" stroke-width="1.2" fill="none"/></svg><svg class="b" style="left:1171px;top:21px;" width="8" height="6" viewBox="0 0 8 6"><path d="M1 1.5L4 4.5L7 1.5" stroke="#444" stroke-width="1.1" fill="none"/></svg><svg class="b" style="left:1189px;top:16px;" width="16" height="19" viewBox="0 0 16 19"><path d="M14 2V8H8" stroke="#aaa" stroke-width="1.2" fill="none"/><path d="M13.5 7.5A6 6 0 1 0 9 17" stroke="#aaa" stroke-width="1.2" fill="none"/></svg><svg class="b" style="left:1210px;top:21px;" width="8" height="6" viewBox="0 0 8 6"><path d="M1 1.5L4 4.5L7 1.5" stroke="#aaa" stroke-width="1.1" fill="none"/></svg><svg class="b" style="left:1231px;top:20px;" width="10" height="10" viewBox="0 0 10 10"><path d="M1 1.5H9M2 4.5L5 7.5L8 4.5" stroke="#444" stroke-width="1.2" fill="none"/></svg><div class="t" style="left:1266.00px;top:19.75px;font-size:13.00px;color:#262626;transform:scaleX(0.9089);">Master - Company Payroll Reminders</div><svg class="b" style="left:1470px;top:19px;" width="14" height="12" viewBox="0 0 14 12"><circle cx="5" cy="5" r="2.5" stroke="#444" stroke-width="1" fill="none"/><path d="M1 11Q5 6 9 11" stroke="#444" stroke-width="1" fill="none"/><circle cx="10" cy="3" r="2" stroke="#444" stroke-width="1" fill="none"/></svg><div class="b" style="left:1493px;top:24px;width:3px;height:3px;background:#333;border-radius:2px;"></div><div class="t" style="left:1502.00px;top:19.75px;font-size:13.00px;color:#262626;transform:scaleX(0.8407);">Saved</div><svg class="b" style="left:1538px;top:21px;" width="10" height="7" viewBox="0 0 10 7"><path d="M1 1L5 5L9 1" stroke="#333" stroke-width="1.2" fill="none"/></svg><svg class="b" style="left:1686px;top:17px;" width="16" height="16" viewBox="0 0 16 16"><circle cx="9.5" cy="6.5" r="5" stroke="#333" stroke-width="1.2" fill="none"/><path d="M6 10L1 15" stroke="#333" stroke-width="1.3"/></svg><svg class="b" style="left:1739px;top:13px;" width="24" height="24" viewBox="0 0 24 24"><defs><clipPath id="av"><circle cx="12" cy="12" r="11.8"/></clipPath></defs><g clip-path="url(#av)"><rect width="24" height="24" fill="#eaeaf1"/><path d="M5 20Q4 10 7 5Q12 0 17 5Q20 10 19 20Z" fill="#a58b66"/><path d="M8 8Q12 3 16 8L17 16Q12 19 8 16Z" fill="#cdb28a"/><ellipse cx="12" cy="11" rx="3.3" ry="4.2" fill="#e9cdb8"/><path d="M2 21Q6 17 10 17L12 22L14 17Q18 18 21 21V24H2Z" fill="#141722"/><path d="M10 17L12 22L14 17Z" fill="#e2c4ae"/></g></svg><div class="b" style="left:1793px;top:24px;width:11px;height:1px;background:#333;"></div><div class="b" style="left:1841px;top:20px;width:11px;height:11px;border:1px solid #333;border-radius:1px;"></div><svg class="b" style="left:1889px;top:19px;" width="12" height="12" viewBox="0 0 12 12"><path d="M1 1L11 11M11 1L1 11" stroke="#333" stroke-width="1.1"/></svg><div class="t" style="left:1514.50px;top:57.52px;font-size:13.50px;color:#262626;transform:scaleX(0.9516);">Automate</div><div class="t" style="left:1591.00px;top:57.52px;font-size:13.50px;color:#262626;transform:scaleX(0.9749);">Developer</div><div class="t" style="left:1670.00px;top:57.52px;font-size:13.50px;color:#262626;transform:scaleX(0.9154);">MACRO</div><div class="t" style="left:1735.00px;top:57.52px;font-size:13.50px;color:#262626;transform:scaleX(0.9364);">Help</div><div class="t" style="left:1782.00px;top:57.52px;font-size:13.50px;color:#262626;transform:scaleX(0.9886);">Acrobat</div><div class="b" style="left:1843px;top:52px;width:24px;height:24px;background:#fff;border:1px solid #8a8a8a;border-radius:4px;"></div><svg class="b" style="left:1849px;top:58px;" width="13" height="12" viewBox="0 0 13 12"><path d="M1 1H12V8H5L2 11V8H1Z" stroke="#333" stroke-width="1" fill="none"/></svg><div class="b" style="left:1875px;top:52px;width:32px;height:24px;background:#107c41;border-radius:4px;"></div><svg class="b" style="left:1880px;top:57px;" width="14" height="13" viewBox="0 0 14 13"><path d="M1 6V12H11V9" stroke="#fff" stroke-width="1.2" fill="none"/><path d="M4 9Q4 4 10 4V1.5L13.5 5L10 8.5V6Q6 6 4 9Z" stroke="#fff" stroke-width="1.1" fill="none"/></svg><svg class="b" style="left:1897px;top:62px;" width="8" height="5" viewBox="0 0 8 5"><path d="M1 1L4 4L7 1" stroke="#fff" stroke-width="1.2" fill="none"/></svg><div class="b" style="left:969px;top:79px;width:942px;height:101px;background:#fff;border-radius:8px 8px 0 0;"></div><div class="b" style="left:1042px;top:84px;width:1px;height:88px;background:#d6d6d6;"></div><div class="b" style="left:1097px;top:84px;width:1px;height:88px;background:#d6d6d6;"></div><div class="b" style="left:1171px;top:84px;width:1px;height:88px;background:#d6d6d6;"></div><div class="b" style="left:1233px;top:84px;width:1px;height:88px;background:#d6d6d6;"></div><div class="b" style="left:1417px;top:84px;width:1px;height:88px;background:#d6d6d6;"></div><div class="b" style="left:1472px;top:84px;width:1px;height:88px;background:#d6d6d6;"></div><div class="b" style="left:1527px;top:84px;width:1px;height:88px;background:#d6d6d6;"></div><div class="b" style="left:1601px;top:84px;width:1px;height:88px;background:#d6d6d6;"></div><div class="b" style="left:1664px;top:84px;width:1px;height:88px;background:#d6d6d6;"></div><div class="b" style="left:1752px;top:84px;width:1px;height:88px;background:#d6d6d6;"></div><div class="b" style="left:1823px;top:84px;width:1px;height:88px;background:#d6d6d6;"></div><svg class="b" style="left:994px;top:85px;" width="30" height="32" viewBox="0 0 30 32"><rect x="2" y="5" width="19" height="23" stroke="#e8800c" stroke-width="1.3" fill="#fff6e2"/><path d="M7 6V3H10A2 2 0 0 1 14 3H17V6Z" stroke="#666" stroke-width="1.1" fill="#fff"/><rect x="13" y="12" width="13" height="17" stroke="#444" stroke-width="1.2" fill="#fff"/></svg><div class="t" style="left:981.00px;top:121.88px;font-size:12.50px;color:#262626;transform:scaleX(0.9717);">Clipboard</div><svg class="b" style="left:1002px;top:140px;" width="8" height="5" viewBox="0 0 8 5"><path d="M1 1L4 4L7 1" stroke="#444" stroke-width="1.1" fill="none"/></svg><svg class="b" style="left:1054px;top:86px;" width="33" height="31" viewBox="0 0 33 31"><path d="M9 21L16 2L23 21M11.5 14H20.5" stroke="#444" stroke-width="1.3" fill="none"/><rect x="0" y="22" width="32" height="8" fill="#222"/></svg><div class="t" style="left:1058.00px;top:121.88px;font-size:12.50px;color:#262626;transform:scaleX(0.9594);">Font</div><svg class="b" style="left:1066px;top:140px;" width="8" height="5" viewBox="0 0 8 5"><path d="M1 1L4 4L7 1" stroke="#444" stroke-width="1.1" fill="none"/></svg><svg class="b" style="left:1119px;top:88px;" width="30" height="24" viewBox="0 0 30 24"><path d="M1 1.5H29M5 6H25M1 11H29M5 16H25M1 21H29" stroke="#333" stroke-width="1"/></svg><div class="t" style="left:1106.00px;top:121.88px;font-size:12.50px;color:#262626;transform:scaleX(1.0073);">Alignment</div><svg class="b" style="left:1130px;top:140px;" width="8" height="5" viewBox="0 0 8 5"><path d="M1 1L4 4L7 1" stroke="#444" stroke-width="1.1" fill="none"/></svg><svg class="b" style="left:1189px;top:88px;" width="27" height="25" viewBox="0 0 27 25"><circle cx="6" cy="6" r="4.6" stroke="#444" stroke-width="1.3" fill="none"/><circle cx="20.5" cy="19" r="4.6" stroke="#444" stroke-width="1.3" fill="none"/><path d="M19 1L7 24" stroke="#444" stroke-width="1.3"/></svg><div class="t" style="left:1180.00px;top:121.88px;font-size:12.50px;color:#262626;transform:scaleX(0.9895);">Number</div><svg class="b" style="left:1198px;top:140px;" width="8" height="5" viewBox="0 0 8 5"><path d="M1 1L4 4L7 1" stroke="#444" stroke-width="1.1" fill="none"/></svg><svg class="b" style="left:1246px;top:88px;" width="16" height="14" viewBox="0 0 16 14"><rect x="0.5" y="0.5" width="15" height="13" stroke="#444" stroke-width="1" fill="#fff"/><rect x="3" y="1" width="8" height="3" fill="#e84a5f"/><rect x="3" y="9" width="8" height="3" fill="#e84a5f"/><rect x="1" y="4.5" width="2" height="4" fill="#3a8ee6"/><path d="M0.5 4.5H15.5M0.5 9H15.5M3 0.5V13.5M11 0.5V13.5" stroke="#444" stroke-width="0.8"/></svg><div class="t" style="left:1266.00px;top:90.38px;font-size:12.50px;color:#262626;transform:scaleX(0.9860);">Conditional Formatting</div><svg class="b" style="left:1392px;top:94px;" width="8" height="5" viewBox="0 0 8 5"><path d="M1 1L4 4L7 1" stroke="#444" stroke-width="1.1" fill="none"/></svg><svg class="b" style="left:1246px;top:114px;" width="16" height="15" viewBox="0 0 16 15"><rect x="0.5" y="0.5" width="15" height="13" stroke="#444" stroke-width="1" fill="#fff"/><path d="M0.5 4.5H15.5M0.5 9H15.5M5 0.5V13.5M10 0.5V13.5" stroke="#444" stroke-width="0.8"/><path d="M6 13L14 5L16 7L8 15Z" fill="#3a8ee6"/></svg><div class="t" style="left:1266.00px;top:116.38px;font-size:12.50px;color:#262626;transform:scaleX(0.9283);">Format as Table</div><svg class="b" style="left:1351px;top:120px;" width="8" height="5" viewBox="0 0 8 5"><path d="M1 1L4 4L7 1" stroke="#444" stroke-width="1.1" fill="none"/></svg><svg class="b" style="left:1246px;top:140px;" width="16" height="15" viewBox="0 0 16 15"><rect x="0.5" y="0.5" width="15" height="13" stroke="#444" stroke-width="1" fill="#cfe3f7"/><path d="M0.5 4H15.5" stroke="#444" stroke-width="0.8"/><path d="M6 13L14 5L16 7L8 15Z" fill="#3a8ee6"/></svg><div class="t" style="left:1266.00px;top:142.38px;font-size:12.50px;color:#262626;transform:scaleX(0.8976);">Cell Styles</div><svg class="b" style="left:1321px;top:146px;" width="8" height="5" viewBox="0 0 8 5"><path d="M1 1L4 4L7 1" stroke="#444" stroke-width="1.1" fill="none"/></svg><div class="t" style="left:1311.00px;top:163.38px;font-size:12.50px;color:#262626;transform:scaleX(0.8518);">Styles</div><svg class="b" style="left:1430px;top:83px;" width="30" height="30" viewBox="0 0 30 30"><rect x="1.3" y="6" width="27.3" height="21.6" stroke="#333" stroke-width="1" fill="#f8f8f8"/><path d="M8.6 6V27.6M21.6 6V27.6M1.3 13.3H28.6M1.3 20.4H28.6" stroke="#444" stroke-width="0.9"/><rect x="8.6" y="13.3" width="13" height="7.1" fill="#8fc0ef" stroke="#1e73d0" stroke-width="1"/><path d="M7 2.5H23M7 1V4M23 1V4" stroke="#1e73d0" stroke-width="1"/></svg><div class="t" style="left:1432.00px;top:121.38px;font-size:12.50px;color:#262626;transform:scaleX(0.8994);">Cells</div><svg class="b" style="left:1440px;top:140px;" width="8" height="5" viewBox="0 0 8 5"><path d="M1 1L4 4L7 1" stroke="#444" stroke-width="1.1" fill="none"/></svg><svg class="b" style="left:1485.5px;top:85px;" width="31" height="31" viewBox="0 0 31 31"><circle cx="18" cy="12" r="10" stroke="#444" stroke-width="1.2" fill="none"/><path d="M11 19L1 29" stroke="#444" stroke-width="1.3"/></svg><div class="t" style="left:1481.00px;top:121.38px;font-size:12.50px;color:#262626;transform:scaleX(0.9677);">Editing</div><svg class="b" style="left:1495px;top:140px;" width="8" height="5" viewBox="0 0 8 5"><path d="M1 1L4 4L7 1" stroke="#444" stroke-width="1.1" fill="none"/></svg><svg class="b" style="left:1618px;top:87px;" width="30" height="30" viewBox="0 0 30 30"><rect x="1" y="1" width="27" height="27" stroke="#d84b21" stroke-width="1.2" fill="none"/><rect x="4.5" y="4.5" width="8.5" height="8.5" stroke="#d84b21" stroke-width="1.05" fill="none"/><rect x="16" y="4.5" width="8.5" height="8.5" stroke="#d84b21" stroke-width="1.05" fill="none"/><rect x="4.5" y="16" width="8.5" height="8.5" stroke="#d84b21" stroke-width="1.05" fill="none"/><rect x="16" y="16" width="8.5" height="8.5" stroke="#d84b21" stroke-width="1.05" fill="none"/></svg><div class="t" style="left:1612.00px;top:123.38px;font-size:12.50px;color:#262626;transform:scaleX(0.9908);">Add-ins</div><svg class="b" style="left:1677px;top:87px;" width="16" height="16" viewBox="0 0 16 16"><path d="M3 2H10L7 14H1Z" fill="#26a0f0"/><path d="M6 2H13L15 10L9 14Z" fill="#e94ca6"/><path d="M5 8L11 2L14 6L8 14L3 13Z" fill="#8a5cf0" opacity="0.8"/><path d="M1 10L5 14H10L7 9Z" fill="#f6b53e"/></svg><div class="t" style="left:1697.00px;top:90.38px;font-size:12.50px;color:#262626;transform:scaleX(1.0020);">Copilot</div><svg class="b" style="left:1778px;top:87px;" width="28" height="30" viewBox="0 0 28 30"><path d="M2 1H14L21 8V28H2Z" stroke="#2b64d8" stroke-width="1.2" fill="none"/><path d="M7 17Q11 6 12 10Q13 15 18 18" stroke="#2b64d8" stroke-width="1" fill="none"/><path d="M16 20L22 26M19 19A2.5 2.5 0 0 1 23 23M14 22A2.5 2.5 0 0 0 18 26" stroke="#2b64d8" stroke-width="1.5" fill="none"/></svg><div class="t" style="left:1770.00px;top:121.38px;font-size:12.50px;color:#262626;transform:scaleX(0.9680);">Adobe</div><div class="t" style="left:1761.00px;top:137.38px;font-size:12.50px;color:#262626;transform:scaleX(1.0906);">Acrobat</div><svg class="b" style="left:1810px;top:141px;" width="8" height="5" viewBox="0 0 8 5"><path d="M1 1L4 4L7 1" stroke="#444" stroke-width="1.1" fill="none"/></svg><svg class="b" style="left:1850px;top:87px;" width="12" height="30" viewBox="0 0 12 30"><circle cx="15" cy="15" r="14" fill="#1f9e35"/><circle cx="15" cy="15" r="7" stroke="#fff" stroke-width="2.5" fill="none"/></svg><div class="t" style="left:1834.00px;top:123.38px;font-size:12.50px;color:#262626;transform:scaleX(0.7794);">Sprea</div><div class="t" style="left:1855.00px;top:139.38px;font-size:12.50px;color:#262626;transform:scaleX(0.8390);">S</div><div class="t" style="left:1830.00px;top:163.38px;font-size:12.50px;color:#262626;transform:scaleX(0.8693);">Sprea</div><div class="b" style="left:1860px;top:80px;width:23px;height:98px;background:#fff;border:1px solid #8a8a8a;"></div><svg class="b" style="left:1867px;top:125px;" width="6" height="8" viewBox="0 0 6 8"><path d="M1.5 1L4.5 4L1.5 7" stroke="#444" stroke-width="1.1" fill="none"/></svg><div class="b" style="left:969px;top:179px;width:942px;height:30px;background:#fcf6d6;border-radius:0 0 8px 8px;box-shadow:0 1px 1px rgba(0,0,0,0.08);"></div><svg class="b" style="left:980px;top:186px;" width="18" height="18" viewBox="0 0 18 18"><circle cx="9" cy="9" r="8" stroke="#2b6fd1" stroke-width="1.3" fill="none"/><path d="M9 7.5V13.5" stroke="#2b6fd1" stroke-width="1.6"/><circle cx="9" cy="5" r="1" fill="#2b6fd1"/></svg><div class="t" style="left:1005.00px;top:188.95px;font-size:13.00px;color:#1a1a1a;transform:scaleX(0.8495);">SLOW WORKBOOK?</div><div class="t" style="left:1124.00px;top:188.95px;font-size:13.00px;color:#1a1a1a;transform:scaleX(0.9274);">97% of your workbook has unused formatting and metadata that can be optimized to improve performance.</div><div class="b" style="left:1705px;top:182px;width:124px;height:25px;background:#fff;border:1px solid #8a8a8a;border-radius:4px;"></div><div class="t" style="left:1714.00px;top:188.95px;font-size:13.00px;color:#1a1a1a;transform:scaleX(0.9052);">Check Performance</div><svg class="b" style="left:1888px;top:188px;" width="12" height="12" viewBox="0 0 12 12"><path d="M1 1L11 11M11 1L1 11" stroke="#333" stroke-width="1.2"/></svg><div class="b" style="left:970px;top:217px;width:101px;height:26px;background:#fff;border:1px solid #d4d4d4;border-radius:4px;"></div><div class="t" style="left:976.00px;top:224.40px;font-size:14.00px;color:#1a1a1a;transform:scaleX(0.8426);">K95</div><svg class="b" style="left:1053px;top:227px;" width="11" height="7" viewBox="0 0 11 7"><path d="M1 1L5.5 5.5L10 1" stroke="#333" stroke-width="1.2" fill="none"/></svg><div class="b" style="left:1080px;top:224px;width:2px;height:3px;background:#333;"></div><div class="b" style="left:1080px;top:229px;width:2px;height:3px;background:#333;"></div><div class="b" style="left:1080px;top:234px;width:2px;height:3px;background:#333;"></div><div class="b" style="left:1092px;top:217px;width:85px;height:26px;background:#fff;border:1px solid #d4d4d4;border-radius:4px;"></div><svg class="b" style="left:1097px;top:223px;" width="13" height="13" viewBox="0 0 13 13"><path d="M1 1L12 12M12 1L1 12" stroke="#aaa" stroke-width="1.1"/></svg><svg class="b" style="left:1119px;top:223px;" width="15" height="12" viewBox="0 0 15 12"><path d="M1 6L5 10L14 1" stroke="#aaa" stroke-width="1.1" fill="none"/></svg><div class="t" style="left:1144.00px;top:221.39px;font-size:17.00px;color:#222;font-family:'Liberation Serif',serif;font-style:italic;transform:scaleX(1.2214);">fx</div><svg class="b" style="left:1164px;top:227px;" width="9" height="6" viewBox="0 0 9 6"><path d="M1 1L4.5 4.5L8 1" stroke="#888" stroke-width="1.1" fill="none"/></svg><div class="b" style="left:1182px;top:217px;width:729px;height:26px;background:#fff;border:1px solid #d4d4d4;border-radius:4px;"></div><svg class="b" style="left:1895px;top:226px;" width="12" height="8" viewBox="0 0 12 8"><path d="M1 1L6 6L11 1" stroke="#333" stroke-width="1.2" fill="none"/></svg><div class="b" style="left:961px;top:250px;width:950px;height:17px;background:#f0f0f0;"></div><div class="b" style="left:961px;top:250px;width:26px;height:17px;background:#f0f0f0;"></div><svg class="b" style="left:970px;top:256px;" width="14" height="10" viewBox="0 0 14 10"><path d="M13 0V9H2Z" fill="#dadada"/></svg><div class="b" style="left:1218px;top:250px;width:59px;height:17px;background:#d2d2d2;"></div><div class="b" style="left:1218px;top:265px;width:59px;height:2px;background:#107c41;"></div><div class="t" style="left:1015.50px;top:252.68px;font-size:12.50px;color:#262626;left:1010.63px;">G</div><div class="b" style="left:1044px;top:251px;width:1px;height:16px;background:#d4d4d4;"></div><div class="t" style="left:1073.00px;top:252.68px;font-size:12.50px;color:#262626;left:1068.48px;">H</div><div class="b" style="left:1102px;top:251px;width:1px;height:16px;background:#d4d4d4;"></div><div class="t" style="left:1131.00px;top:252.68px;font-size:12.50px;color:#262626;left:1129.26px;">I</div><div class="b" style="left:1160px;top:251px;width:1px;height:16px;background:#d4d4d4;"></div><div class="t" style="left:1189.00px;top:252.68px;font-size:12.50px;color:#262626;left:1185.88px;">J</div><div class="b" style="left:1218px;top:251px;width:1px;height:16px;background:#d4d4d4;"></div><div class="t" style="left:1247.50px;top:252.68px;font-size:12.50px;color:#107c41;left:1243.33px;">K</div><div class="b" style="left:1277px;top:251px;width:1px;height:16px;background:#d4d4d4;"></div><div class="t" style="left:1305.50px;top:252.68px;font-size:12.50px;color:#262626;left:1302.02px;">L</div><div class="b" style="left:1334px;top:251px;width:1px;height:16px;background:#d4d4d4;"></div><div class="t" style="left:1363.00px;top:252.68px;font-size:12.50px;color:#262626;left:1357.79px;">M</div><div class="b" style="left:1392px;top:251px;width:1px;height:16px;background:#d4d4d4;"></div><div class="t" style="left:1421.00px;top:252.68px;font-size:12.50px;color:#262626;left:1416.48px;">N</div><div class="b" style="left:1450px;top:251px;width:1px;height:16px;background:#d4d4d4;"></div><div class="t" style="left:1479.00px;top:252.68px;font-size:12.50px;color:#262626;left:1474.13px;">O</div><div class="b" style="left:1508px;top:251px;width:1px;height:16px;background:#d4d4d4;"></div><div class="t" style="left:1543.50px;top:252.68px;font-size:12.50px;color:#262626;left:1539.33px;">P</div><div class="b" style="left:1579px;top:251px;width:1px;height:16px;background:#d4d4d4;"></div><div class="t" style="left:1608.00px;top:252.68px;font-size:12.50px;color:#262626;left:1603.13px;">Q</div><div class="b" style="left:1637px;top:251px;width:1px;height:16px;background:#d4d4d4;"></div><div class="t" style="left:1666.00px;top:252.68px;font-size:12.50px;color:#262626;left:1661.48px;">R</div><div class="b" style="left:1695px;top:251px;width:1px;height:16px;background:#d4d4d4;"></div><div class="t" style="left:1724.00px;top:252.68px;font-size:12.50px;color:#262626;left:1719.83px;">S</div><div class="b" style="left:1753px;top:251px;width:1px;height:16px;background:#d4d4d4;"></div><div class="t" style="left:1782.50px;top:252.68px;font-size:12.50px;color:#262626;left:1778.68px;">T</div><div class="b" style="left:1812px;top:251px;width:1px;height:16px;background:#d4d4d4;"></div><div class="t" style="left:1841.00px;top:252.68px;font-size:12.50px;color:#262626;left:1836.48px;">U</div><div class="b" style="left:1870px;top:251px;width:1px;height:16px;background:#d4d4d4;"></div><div class="t" style="left:1899.00px;top:252.68px;font-size:12.50px;color:#262626;left:1894.83px;">V</div><div class="b" style="left:1928px;top:251px;width:1px;height:16px;background:#d4d4d4;"></div><div class="b" style="left:986px;top:251px;width:1px;height:16px;background:#d4d4d4;"></div><div class="b" style="left:1897px;top:250px;width:14px;height:17px;background:#f0f0f0;"></div><div class="b" style="left:961px;top:267px;width:936px;height:1px;background:#9e9e9e;"></div><div class="b" style="left:987px;top:268px;width:910px;height:708px;background:#fff;"></div><div class="b" style="left:961px;top:268px;width:25px;height:708px;background:#f0f0f0;"></div><div class="b" style="left:986px;top:268px;width:1px;height:708px;background:#9e9e9e;"></div><div class="t" style="left:974.00px;top:272.00px;font-size:12.00px;color:#444;transform:scaleX(0.9121);left:970.95px;">1</div><div class="b" style="left:961px;top:285px;width:25px;height:1px;background:#dcdcdc;"></div><div class="t" style="left:974.00px;top:290.00px;font-size:12.00px;color:#444;transform:scaleX(0.9121);left:970.95px;">2</div><div class="b" style="left:961px;top:303px;width:25px;height:1px;background:#dcdcdc;"></div><div class="t" style="left:974.00px;top:308.00px;font-size:12.00px;color:#444;transform:scaleX(0.9121);left:970.95px;">3</div><div class="b" style="left:961px;top:321px;width:25px;height:1px;background:#dcdcdc;"></div><div class="t" style="left:974.00px;top:326.00px;font-size:12.00px;color:#444;transform:scaleX(0.9121);left:970.95px;">4</div><div class="b" style="left:961px;top:339px;width:25px;height:1px;background:#dcdcdc;"></div><div class="t" style="left:974.00px;top:344.00px;font-size:12.00px;color:#444;transform:scaleX(0.9121);left:970.95px;">5</div><div class="b" style="left:961px;top:357px;width:25px;height:1px;background:#dcdcdc;"></div><div class="t" style="left:974.00px;top:364.00px;font-size:12.00px;color:#1010e0;transform:scaleX(0.9132);left:967.90px;">75</div><div class="b" style="left:961px;top:378px;width:25px;height:1px;background:#dcdcdc;"></div><div class="t" style="left:974.00px;top:400.00px;font-size:12.00px;color:#1010e0;transform:scaleX(0.9132);left:967.90px;">76</div><div class="b" style="left:961px;top:414px;width:25px;height:1px;background:#dcdcdc;"></div><div class="t" style="left:974.00px;top:436.00px;font-size:12.00px;color:#1010e0;transform:scaleX(0.9132);left:967.90px;">77</div><div class="b" style="left:961px;top:450px;width:25px;height:1px;background:#dcdcdc;"></div><div class="t" style="left:974.00px;top:454.00px;font-size:12.00px;color:#1010e0;transform:scaleX(0.9132);left:967.90px;">78</div><div class="b" style="left:961px;top:468px;width:25px;height:1px;background:#dcdcdc;"></div><div class="t" style="left:974.00px;top:490.00px;font-size:12.00px;color:#1010e0;transform:scaleX(0.9132);left:967.90px;">79</div><div class="b" style="left:961px;top:504px;width:25px;height:1px;background:#dcdcdc;"></div><div class="t" style="left:974.00px;top:526.00px;font-size:12.00px;color:#1010e0;transform:scaleX(0.9132);left:967.90px;">80</div><div class="b" style="left:961px;top:540px;width:25px;height:1px;background:#dcdcdc;"></div><div class="t" style="left:974.00px;top:562.00px;font-size:12.00px;color:#1010e0;transform:scaleX(0.9132);left:967.90px;">81</div><div class="b" style="left:961px;top:576px;width:25px;height:1px;background:#dcdcdc;"></div><div class="t" style="left:974.00px;top:598.00px;font-size:12.00px;color:#1010e0;transform:scaleX(0.9132);left:967.90px;">82</div><div class="b" style="left:961px;top:612px;width:25px;height:1px;background:#dcdcdc;"></div><div class="t" style="left:974.00px;top:616.00px;font-size:12.00px;color:#1010e0;transform:scaleX(0.9132);left:967.90px;">83</div><div class="b" style="left:961px;top:630px;width:25px;height:1px;background:#dcdcdc;"></div><div class="t" style="left:974.00px;top:634.00px;font-size:12.00px;color:#1010e0;transform:scaleX(0.9132);left:967.90px;">84</div><div class="b" style="left:961px;top:648px;width:25px;height:1px;background:#dcdcdc;"></div><div class="t" style="left:974.00px;top:652.00px;font-size:12.00px;color:#1010e0;transform:scaleX(0.9132);left:967.90px;">85</div><div class="b" style="left:961px;top:666px;width:25px;height:1px;background:#dcdcdc;"></div><div class="t" style="left:974.00px;top:670.00px;font-size:12.00px;color:#1010e0;transform:scaleX(0.9132);left:967.90px;">86</div><div class="b" style="left:961px;top:684px;width:25px;height:1px;background:#dcdcdc;"></div><div class="t" style="left:974.00px;top:688.00px;font-size:12.00px;color:#1010e0;transform:scaleX(0.9132);left:967.90px;">87</div><div class="b" style="left:961px;top:702px;width:25px;height:1px;background:#dcdcdc;"></div><div class="t" style="left:974.00px;top:706.00px;font-size:12.00px;color:#1010e0;transform:scaleX(0.9132);left:967.90px;">88</div><div class="b" style="left:961px;top:720px;width:25px;height:1px;background:#dcdcdc;"></div><div class="t" style="left:974.00px;top:724.00px;font-size:12.00px;color:#1010e0;transform:scaleX(0.9132);left:967.90px;">89</div><div class="b" style="left:961px;top:738px;width:25px;height:1px;background:#dcdcdc;"></div><div class="t" style="left:974.00px;top:742.00px;font-size:12.00px;color:#1010e0;transform:scaleX(0.9132);left:967.90px;">90</div><div class="b" style="left:961px;top:756px;width:25px;height:1px;background:#dcdcdc;"></div><div class="t" style="left:974.00px;top:760.00px;font-size:12.00px;color:#1010e0;transform:scaleX(0.9132);left:967.90px;">91</div><div class="b" style="left:961px;top:774px;width:25px;height:1px;background:#dcdcdc;"></div><div class="t" style="left:974.00px;top:778.00px;font-size:12.00px;color:#1010e0;transform:scaleX(0.9132);left:967.90px;">92</div><div class="b" style="left:961px;top:792px;width:25px;height:1px;background:#dcdcdc;"></div><div class="t" style="left:974.00px;top:796.00px;font-size:12.00px;color:#444;transform:scaleX(0.9132);left:967.90px;">93</div><div class="b" style="left:961px;top:810px;width:25px;height:1px;background:#dcdcdc;"></div><div class="t" style="left:974.00px;top:814.00px;font-size:12.00px;color:#444;transform:scaleX(0.9132);left:967.90px;">94</div><div class="b" style="left:961px;top:828px;width:25px;height:1px;background:#dcdcdc;"></div><div class="b" style="left:961px;top:829px;width:25px;height:18px;background:#dedede;"></div><div class="b" style="left:985px;top:829px;width:2px;height:18px;background:#107c41;"></div><div class="t" style="left:974.00px;top:832.00px;font-size:12.00px;color:#107c41;transform:scaleX(0.9132);left:967.90px;">95</div><div class="b" style="left:961px;top:846px;width:25px;height:1px;background:#dcdcdc;"></div><div class="t" style="left:974.00px;top:850.00px;font-size:12.00px;color:#444;transform:scaleX(0.9132);left:967.90px;">96</div><div class="b" style="left:961px;top:864px;width:25px;height:1px;background:#dcdcdc;"></div><div class="t" style="left:974.00px;top:868.00px;font-size:12.00px;color:#444;transform:scaleX(0.9132);left:967.90px;">97</div><div class="b" style="left:961px;top:882px;width:25px;height:1px;background:#dcdcdc;"></div><div class="t" style="left:974.00px;top:886.00px;font-size:12.00px;color:#444;transform:scaleX(0.9132);left:967.90px;">98</div><div class="b" style="left:961px;top:900px;width:25px;height:1px;background:#dcdcdc;"></div><div class="t" style="left:974.00px;top:904.00px;font-size:12.00px;color:#444;transform:scaleX(0.9132);left:967.90px;">99</div><div class="b" style="left:961px;top:918px;width:25px;height:1px;background:#dcdcdc;"></div><div class="t" style="left:974.00px;top:922.00px;font-size:12.00px;color:#444;transform:scaleX(0.9136);left:964.85px;">100</div><div class="b" style="left:961px;top:936px;width:25px;height:1px;background:#dcdcdc;"></div><div class="t" style="left:974.00px;top:940.00px;font-size:12.00px;color:#444;transform:scaleX(0.9136);left:964.85px;">101</div><div class="b" style="left:961px;top:954px;width:25px;height:1px;background:#dcdcdc;"></div><div class="t" style="left:974.00px;top:958.00px;font-size:12.00px;color:#444;transform:scaleX(0.9136);left:964.85px;">102</div><div class="b" style="left:961px;top:972px;width:25px;height:1px;background:#dcdcdc;"></div><div class="b" style="left:961px;top:360px;width:936px;height:1px;background:#8f8f8f;"></div><div class="t" style="left:989.00px;top:652.75px;font-size:11.00px;color:#111;transform:scaleX(1.0181);">ACC - Accident Ins</div><div class="t" style="left:1153.50px;top:652.75px;font-size:11.00px;color:#111;transform:scaleX(1.0923);left:1130.10px;">7.63</div><div class="t" style="left:1453.00px;top:652.75px;font-size:11.00px;color:#111;transform:scaleX(0.9748);">Yes</div><div class="t" style="left:1576.50px;top:652.75px;font-size:11.00px;color:#111;transform:scaleX(1.1648);left:1519.50px;">6/12/2025</div><div class="t" style="left:989.00px;top:670.75px;font-size:11.00px;color:#111;transform:scaleX(0.9325);">CRE - CRITICAL ILL EE</div><div class="t" style="left:1153.50px;top:670.75px;font-size:11.00px;color:#111;transform:scaleX(1.0923);left:1130.10px;">5.19</div><div class="t" style="left:1453.00px;top:670.75px;font-size:11.00px;color:#111;transform:scaleX(0.9748);">Yes</div><div class="t" style="left:1576.50px;top:670.75px;font-size:11.00px;color:#111;transform:scaleX(1.1648);left:1519.50px;">8/24/2025</div><div class="t" style="left:989.00px;top:688.75px;font-size:11.00px;color:#111;transform:scaleX(0.9303);">DEN - DEN PRE TAX</div><div class="t" style="left:1153.50px;top:688.75px;font-size:11.00px;color:#111;transform:scaleX(1.0923);left:1130.10px;">9.94</div><div class="t" style="left:1453.00px;top:688.75px;font-size:11.00px;color:#111;transform:scaleX(0.9748);">Yes</div><div class="t" style="left:1576.50px;top:688.75px;font-size:11.00px;color:#111;transform:scaleX(1.1443);left:1520.50px;">12/1/2025</div><div class="t" style="left:989.00px;top:706.75px;font-size:11.00px;color:#111;transform:scaleX(0.9926);">FSA - Flexible Spendi</div><div class="t" style="left:1153.50px;top:706.75px;font-size:11.00px;color:#111;transform:scaleX(1.1078);left:1123.00px;">57.69</div><div class="t" style="left:1453.00px;top:706.75px;font-size:11.00px;color:#111;transform:scaleX(0.9748);">Yes</div><div class="t" style="left:1576.50px;top:706.75px;font-size:11.00px;color:#111;transform:scaleX(1.1351);left:1514.00px;">12/27/2025</div><div class="t" style="left:989.00px;top:724.75px;font-size:11.00px;color:#111;transform:scaleX(0.9830);">LIC - LifeCH</div><div class="t" style="left:1153.50px;top:724.75px;font-size:11.00px;color:#111;transform:scaleX(1.0737);left:1130.50px;">1.12</div><div class="t" style="left:1453.00px;top:724.75px;font-size:11.00px;color:#111;transform:scaleX(0.9748);">Yes</div><div class="t" style="left:1576.50px;top:724.75px;font-size:11.00px;color:#111;transform:scaleX(1.1648);left:1519.50px;">7/13/2025</div><div class="t" style="left:989.00px;top:742.75px;font-size:11.00px;color:#111;transform:scaleX(0.9539);">LIF - LifeEE</div><div class="t" style="left:1153.50px;top:742.75px;font-size:11.00px;color:#111;transform:scaleX(1.0923);left:1130.10px;">7.28</div><div class="t" style="left:1453.00px;top:742.75px;font-size:11.00px;color:#111;transform:scaleX(0.9748);">Yes</div><div class="t" style="left:1576.50px;top:742.75px;font-size:11.00px;color:#111;transform:scaleX(1.1648);left:1519.50px;">6/12/2025</div><div class="t" style="left:989.00px;top:760.75px;font-size:11.00px;color:#111;transform:scaleX(1.0156);">MED - Health Insuranc</div><div class="t" style="left:1153.50px;top:760.75px;font-size:11.00px;color:#111;transform:scaleX(1.1078);left:1123.00px;">24.52</div><div class="t" style="left:1453.00px;top:760.75px;font-size:11.00px;color:#111;transform:scaleX(0.9748);">Yes</div><div class="t" style="left:1576.50px;top:760.75px;font-size:11.00px;color:#111;transform:scaleX(1.1443);left:1520.50px;">12/1/2025</div><div class="t" style="left:989.00px;top:778.75px;font-size:11.00px;color:#111;transform:scaleX(0.9443);">RTH - ROTH$</div><div class="t" style="left:1153.50px;top:778.75px;font-size:11.00px;color:#111;transform:scaleX(1.1078);left:1123.00px;">25.00</div><div class="t" style="left:1576.50px;top:778.75px;font-size:11.00px;color:#111;transform:scaleX(1.1521);left:1514.00px;">11/19/2025</div><div class="t" style="left:989.00px;top:796.75px;font-size:11.00px;color:#111;transform:scaleX(0.9582);">STD - STD Post Tax</div><div class="t" style="left:1153.50px;top:796.75px;font-size:11.00px;color:#111;transform:scaleX(1.1078);left:1123.00px;">27.66</div><div class="t" style="left:1453.00px;top:796.75px;font-size:11.00px;color:#111;transform:scaleX(0.9748);">Yes</div><div class="t" style="left:1576.50px;top:796.75px;font-size:11.00px;color:#111;transform:scaleX(1.1648);left:1519.50px;">6/15/2025</div><div class="t" style="left:989.00px;top:814.75px;font-size:11.00px;color:#111;transform:scaleX(1.0342);">VIS - Vision Deductio</div><div class="t" style="left:1153.50px;top:814.75px;font-size:11.00px;color:#111;transform:scaleX(1.0923);left:1130.10px;">2.05</div><div class="t" style="left:1453.00px;top:814.75px;font-size:11.00px;color:#111;transform:scaleX(0.9748);">Yes</div><div class="t" style="left:1576.50px;top:814.75px;font-size:11.00px;color:#111;transform:scaleX(1.1443);left:1520.50px;">12/1/2025</div><div class="t" style="left:1453.00px;top:553.45px;font-size:11.00px;color:#111;transform:scaleX(1.0638);">Effective D Action</div><div class="b" style="left:1217px;top:827px;width:61px;height:21px;border:2px solid #0f6b37;"></div><div class="b" style="left:1273px;top:843px;width:7px;height:7px;background:#fff;"></div><div class="b" style="left:1274px;top:844px;width:5.5px;height:5.5px;background:#1d7444;"></div><div class="b" style="left:1897px;top:268px;width:22px;height:710px;background:#f0f0f0;"></div><div class="b" style="left:1900px;top:250px;width:17px;height:728px;background:#f4f4f4;border-radius:8px;"></div><div class="b" style="left:961px;top:976px;width:958px;height:30px;background:#fff;"></div><div class="b" style="left:961px;top:977px;width:116px;height:29px;background:#f0f0f0;border-radius:0 7px 0 0;"></div><div class="b" style="left:1195px;top:977px;width:724px;height:29px;background:#f0f0f0;border-radius:7px 0 0 0;"></div><div class="b" style="left:1897px;top:976px;width:22px;height:30px;background:#f0f0f0;"></div><svg class="b" style="left:988px;top:985px;" width="8" height="13" viewBox="0 0 8 13"><path d="M7 1L1 6.5L7 12" stroke="#888" stroke-width="1.1" fill="none"/></svg><svg class="b" style="left:1021px;top:985px;" width="8" height="13" viewBox="0 0 8 13"><path d="M1 1L7 6.5L1 12" stroke="#333" stroke-width="1.1" fill="none"/></svg><div class="b" style="left:1077px;top:976px;width:118px;height:29px;background:#fff;border-radius:0 0 6px 6px;box-shadow:0 1px 1.5px rgba(0,0,0,0.13);"></div><div class="t" style="left:1085.00px;top:983.52px;font-size:13.50px;color:#1f1f1f;transform:scaleX(1.0222);">CompOne (U4F)</div><div class="b" style="left:1085px;top:1000px;width:102px;height:2px;background:#107c41;"></div><div class="t" style="left:1213.00px;top:986.52px;font-size:13.50px;color:#262626;transform:scaleX(0.9570);">FDI (NR2-TXU)</div><div class="t" style="left:1332.00px;top:986.52px;font-size:13.50px;color:#262626;transform:scaleX(0.9721);">HAA (6Y7)</div><div class="t" style="left:1422.00px;top:986.52px;font-size:13.50px;color:#262626;transform:scaleX(0.9053);">IME (FJV)</div><div class="t" style="left:1506.00px;top:986.52px;font-size:13.50px;color:#262626;transform:scaleX(0.9502);">MAI (RPC)</div><div class="t" style="left:1596.00px;top:986.52px;font-size:13.50px;color:#262626;transform:scaleX(0.9300);">MAI (RES)</div><div class="b" style="left:1199px;top:985px;width:1px;height:17px;background:#cfcfcf;"></div><div class="b" style="left:1318px;top:985px;width:1px;height:17px;background:#cfcfcf;"></div><div class="b" style="left:1409px;top:985px;width:1px;height:17px;background:#cfcfcf;"></div><div class="b" style="left:1492px;top:985px;width:1px;height:17px;background:#cfcfcf;"></div><div class="b" style="left:1583px;top:985px;width:1px;height:17px;background:#cfcfcf;"></div><div class="b" style="left:1670px;top:985px;width:1px;height:17px;background:#cfcfcf;"></div><div class="t" style="left:1685.00px;top:986.52px;font-size:13.50px;color:#262626;transform:scaleX(0.7843);">Ri</div><div class="b" style="left:1705px;top:990px;width:3px;height:3px;background:#333;border-radius:1.5px;"></div><div class="b" style="left:1709.5px;top:990px;width:3px;height:3px;background:#333;border-radius:1.5px;"></div><div class="b" style="left:1714px;top:990px;width:3px;height:3px;background:#333;border-radius:1.5px;"></div><svg class="b" style="left:1736px;top:986px;" width="13" height="13" viewBox="0 0 13 13"><path d="M6.5 0.5V12.5M0.5 6.5H12.5" stroke="#333" stroke-width="1.2"/></svg><div class="b" style="left:1774px;top:987px;width:2px;height:2.5px;background:#333;"></div><div class="b" style="left:1774px;top:992px;width:2px;height:2.5px;background:#333;"></div><div class="b" style="left:1774px;top:997px;width:2px;height:2.5px;background:#333;"></div><div class="b" style="left:1792px;top:984px;width:105px;height:17px;background:#e9e9e9;border-radius:8px;"></div><div class="b" style="left:1852px;top:988px;width:27px;height:9px;background:#777;border-radius:4.5px;"></div><svg class="b" style="left:1885px;top:987px;" width="7" height="10" viewBox="0 0 7 10"><path d="M0 0V10L7 5Z" fill="#666"/></svg><div class="b" style="left:961px;top:1006px;width:958px;height:3px;background:#f0f0f0;"></div><div class="b" style="left:961px;top:1009px;width:958px;height:22px;background:#f3f3f3;"></div><div class="t" style="left:973.00px;top:1014.60px;font-size:12.00px;color:#444;transform:scaleX(0.8937);">Ready</div><svg class="b" style="left:1054px;top:1012px;" width="15" height="15" viewBox="0 0 15 15"><circle cx="6" cy="2" r="1.5" stroke="#333" stroke-width="1" fill="none"/><path d="M1 5H11M6 5V9L3 14M6 9L9 14" stroke="#333" stroke-width="1.1" fill="none"/><path d="M9 10L14 15M14 10L9 15" stroke="#333" stroke-width="1.1"/></svg><div class="t" style="left:1073.00px;top:1014.60px;font-size:12.00px;color:#262626;font-weight:700;transform:scaleX(0.8787);">Accessibility: Investigate</div><div class="b" style="left:1608px;top:1010px;width:40px;height:21px;background:#dcdcdc;"></div><svg class="b" style="left:1620px;top:1013px;" width="15" height="15" viewBox="0 0 15 15"><path d="M1 1H14V14H1ZM1 5.3H14M1 9.7H14M5.3 1V14M9.7 1V14" stroke="#333" stroke-width="1.1" fill="none"/></svg><svg class="b" style="left:1660px;top:1013px;" width="15" height="15" viewBox="0 0 15 15"><rect x="1" y="1" width="13" height="13" stroke="#333" stroke-width="1.1" fill="none"/><rect x="3.5" y="3.5" width="8" height="8" stroke="#333" stroke-width="1" fill="none"/><path d="M5 6H10M5 8H10" stroke="#333" stroke-width="0.9"/></svg><svg class="b" style="left:1700px;top:1012px;" width="16" height="15" viewBox="0 0 16 15"><path d="M1 14V1H15V14ZM5 1V8H11V1M8 1V8" stroke="#333" stroke-width="1.1" fill="none"/></svg><div class="b" style="left:1734px;top:1019px;width:8px;height:1px;background:#333;"></div><div class="b" style="left:1747px;top:1019px;width:100px;height:1px;background:#555;"></div><div class="b" style="left:1790px;top:1013px;width:5px;height:12px;background:#666;"></div><div class="b" style="left:1797px;top:1016px;width:1px;height:7px;background:#666;"></div><svg class="b" style="left:1852px;top:1014px;" width="10" height="10" viewBox="0 0 10 10"><path d="M5 0.5V9.5M0.5 5H9.5" stroke="#333" stroke-width="1"/></svg><div class="t" style="left:1873.00px;top:1014.23px;font-size:11.50px;color:#444;transform:scaleX(0.9118);">90%</div><div class="b" style="left:960px;top:0px;width:960px;height:1032px;border:1px solid #107c41;border-right-width:1px;"></div><div class="b" style="left:0px;top:1032px;width:1920px;height:48px;background:#eeeeee;"></div><div class="b" style="left:0px;top:1032px;width:1920px;height:1px;background:#dcdcdc;"></div><svg class="b" style="left:19px;top:1045px;" width="26" height="24" viewBox="0 0 26 24"><circle cx="11" cy="11" r="9" fill="#f7a11a"/><path d="M5 22H22A4 4 0 0 0 21 14A6 6 0 0 0 10 15A4 4 0 0 0 5 22Z" fill="#b9d7f5"/><path d="M5 22H22A4 4 0 0 0 21 14" stroke="#7fb0e6" stroke-width="1" fill="none"/></svg><div class="b" style="left:29px;top:1038px;width:17px;height:17px;background:#c42b1c;border-radius:9px;"></div><div class="t" style="left:34.00px;top:1041.65px;font-size:11.00px;color:#fff;transform:scaleX(0.8163);">1</div><div class="t" style="left:50.00px;top:1041.80px;font-size:12.00px;color:#1a1a1a;transform:scaleX(0.9418);">36°F</div><div class="t" style="left:50.00px;top:1057.80px;font-size:12.00px;color:#444;transform:scaleX(0.9844);">Partly sunny</div><svg class="b" style="left:551px;top:1045px;" width="24" height="24" viewBox="0 0 24 24"><rect x="0" y="0" width="11.4" height="11.4" fill="#1e90e6"/><rect x="12.6" y="0" width="11.4" height="11.4" fill="#3ab4f2"/><rect x="0" y="12.6" width="11.4" height="11.4" fill="#1478c8"/><rect x="12.6" y="12.6" width="11.4" height="11.4" fill="#2a9ae8"/></svg><div class="b" style="left:588px;top:1041px;width:218px;height:31px;background:#f8f8f8;border:1px solid #dadada;border-radius:16px;"></div><svg class="b" style="left:599px;top:1048px;" width="16" height="16" viewBox="0 0 16 16"><circle cx="6.5" cy="6.5" r="5.2" stroke="#1a1a1a" stroke-width="1.6" fill="none"/><path d="M10.5 10.5L15 15" stroke="#1a1a1a" stroke-width="1.7"/></svg><div class="t" style="left:624.00px;top:1050.10px;font-size:14.00px;color:#666;transform:scaleX(0.9243);">Search</div><svg class="b" style="left:818px;top:1044px;" width="24" height="24" viewBox="0 0 24 24"><defs><linearGradient id="tv1" x1="0" y1="0" x2="0" y2="1"><stop offset="0" stop-color="#fdfdfd"/><stop offset="1" stop-color="#dcdcdc"/></linearGradient><linearGradient id="tv2" x1="0" y1="0" x2="0" y2="1"><stop offset="0" stop-color="#3a3a3a"/><stop offset="1" stop-color="#111"/></linearGradient></defs><rect x="1" y="7" width="18" height="16" rx="1.5" fill="url(#tv2)"/><rect x="7" y="1" width="17" height="15" rx="1.5" fill="url(#tv1)"/><rect x="7" y="7" width="12" height="9" fill="#b5b5b5"/></svg><svg class="b" style="left:863px;top:1044px;" width="24" height="24" viewBox="0 0 24 24"><path d="M1 4Q1 2 3 2H9L11 4H21Q23 4 23 6V20Q23 22 21 22H3Q1 22 1 20Z" fill="#e8a817"/><rect x="1" y="7" width="22" height="15" rx="1.5" fill="#fcd052"/><rect x="5" y="15" width="14" height="7" rx="2" fill="#1a73c9"/><rect x="8" y="17" width="8" height="1.5" fill="#4fa0e8"/></svg><div class="b" style="left:872.0px;top:1072px;width:6px;height:3px;background:#8a8a8a;border-radius:1.5px;"></div><svg class="b" style="left:907px;top:1044px;" width="24" height="25" viewBox="0 0 24 25"><defs><linearGradient id="eg" x1="0" y1="1" x2="1" y2="0"><stop offset="0" stop-color="#0b5fb8"/><stop offset="0.5" stop-color="#2ab0e6"/><stop offset="1" stop-color="#58d66a"/></linearGradient></defs><circle cx="12.5" cy="12" r="11.5" fill="url(#eg)"/><path d="M4 13Q6 6 12 7Q15 8 13 11Q11 12 12 15Q14 18 20 17Q16 22 10 21Q3 19 4 13Z" fill="#fff"/><path d="M5 14Q7 9 11 10Q10 14 13 17Q9 19 5 14Z" fill="#1680d0"/><rect x="0" y="15" width="11" height="9" rx="1" fill="#c2701a"/><rect x="0" y="15" width="11" height="3" fill="#e08a2a"/><rect x="4.5" y="17" width="2" height="2" fill="#f4d04a"/></svg><div class="b" style="left:916.0px;top:1072px;width:6px;height:3px;background:#8a8a8a;border-radius:1.5px;"></div><svg class="b" style="left:950px;top:1043px;" width="26" height="26" viewBox="0 0 26 26"><defs><linearGradient id="tm" x1="0" y1="0" x2="0" y2="1"><stop offset="0" stop-color="#8a8ff0"/><stop offset="1" stop-color="#5b5fd0"/></linearGradient></defs><circle cx="10" cy="5" r="3.2" fill="#8b91f2"/><rect x="8" y="10" width="15" height="15" rx="4" fill="url(#tm)"/><rect x="1" y="12" width="12" height="12" rx="2" fill="#4b4fc0"/><text x="7" y="22" font-size="9.5" font-weight="700" fill="#fff" text-anchor="middle" font-family="Liberation Sans">T</text></svg><div class="b" style="left:964px;top:1038px;width:17px;height:17px;background:#c42b1c;border-radius:9px;"></div><div class="t" style="left:969.00px;top:1041.65px;font-size:11.00px;color:#fff;transform:scaleX(0.8163);">1</div><div class="b" style="left:959.5px;top:1072px;width:6px;height:3px;background:#8a8a8a;border-radius:1.5px;"></div><svg class="b" style="left:994px;top:1044px;" width="24" height="25" viewBox="0 0 24 25"><path d="M2 1L20 3V16L2 14Z" fill="#d8dde6"/><path d="M3 2.5L19 4.2V15L3 13.2Z" fill="#1b3fc8"/><path d="M9 3L19 4.2V15L13 14Z" fill="#6f95f0"/><path d="M6 15L14 16L15 20H5Z" fill="#c9cdd2"/><circle cx="17.5" cy="19" r="5" fill="#7a7a7a"/><circle cx="17.5" cy="19" r="4" fill="#eef2ee"/><path d="M15 18L17 20M20 18L18 20" stroke="#2a8a3a" stroke-width="1.3"/></svg><svg class="b" style="left:1038px;top:1044px;" width="25" height="25" viewBox="0 0 25 25"><circle cx="12.5" cy="12.5" r="11" stroke="#1660c8" stroke-width="2.4" fill="#fff"/><path d="M18 8A6.5 6.5 0 1 0 18 17" stroke="#1660c8" stroke-width="2.8" fill="none"/><path d="M12.5 12.5H23.5" stroke="#1660c8" stroke-width="2.6"/></svg><svg class="b" style="left:1082px;top:1044px;" width="25" height="25" viewBox="0 0 25 25"><circle cx="12.5" cy="12.5" r="12" fill="#db4437"/><path d="M12.5 12.5L2 6.5A12 12 0 0 0 8 23.5Z" fill="#0f9d58"/><path d="M12.5 12.5L8 23.5A12 12 0 0 0 24.5 9Z" fill="#ffcd40"/><path d="M2 6.5A12 12 0 0 1 24 8H12.5Z" fill="#db4437"/><circle cx="12.5" cy="12.5" r="5.5" fill="#fff"/><circle cx="12.5" cy="12.5" r="4.3" fill="#4285f4"/></svg><div class="b" style="left:1091.7px;top:1072px;width:6px;height:3px;background:#8a8a8a;border-radius:1.5px;"></div><svg class="b" style="left:1126px;top:1044px;" width="25" height="25" viewBox="0 0 25 25"><path d="M7 3H22Q24 3 24 5V19Q24 22 21 22H10Q7 22 7 19Z" fill="#1490df"/><path d="M10 9L24 9V19Q24 22 21 22H10Z" fill="#28a8ea"/><rect x="1" y="9" width="11" height="11" rx="2" fill="#0a64b8"/><circle cx="6.5" cy="14.5" r="3" stroke="#fff" stroke-width="1.6" fill="none"/></svg><div class="b" style="left:1135.4px;top:1072px;width:6px;height:3px;background:#8a8a8a;border-radius:1.5px;"></div><svg class="b" style="left:1170px;top:1044px;" width="24" height="25" viewBox="0 0 24 25"><rect x="6" y="1" width="17" height="22" rx="2.5" fill="#ca64ea"/><rect x="14" y="8" width="9" height="15" rx="1" fill="#9332bf"/><rect x="1" y="8" width="12" height="12" rx="2" fill="#7719aa"/><text x="7" y="18" font-size="9" font-weight="700" fill="#fff" text-anchor="middle" font-family="Liberation Sans">N</text></svg><div class="b" style="left:1178.9px;top:1072px;width:6px;height:3px;background:#8a8a8a;border-radius:1.5px;"></div><svg class="b" style="left:1214px;top:1045px;" width="24" height="23" viewBox="0 0 24 23"><rect x="1" y="1" width="22" height="21" rx="5" fill="#3a1a8c"/><path d="M16 7A6 6 0 1 0 17 14H12" stroke="#fff" stroke-width="2.2" fill="none"/></svg><div class="b" style="left:1223.6px;top:1072px;width:6px;height:3px;background:#8a8a8a;border-radius:1.5px;"></div><div class="b" style="left:1252px;top:1037px;width:38px;height:38px;background:#f8f8f8;border:1px solid #e4e4e4;border-radius:5px;"></div><svg class="b" style="left:1258px;top:1044px;" width="25" height="25" viewBox="0 0 25 25"><rect x="6" y="1" width="18" height="22" rx="2" fill="#21a366"/><rect x="6" y="1" width="9" height="7" fill="#33c481"/><rect x="15" y="1" width="9" height="7" fill="#8ed973" /><rect x="6" y="15" width="18" height="8" fill="#107c41"/><rect x="1" y="9" width="12" height="12" rx="2" fill="#185c37"/><text x="7" y="19" font-size="9" font-weight="700" fill="#fff" text-anchor="middle" font-family="Liberation Sans">x</text></svg><div class="b" style="left:1262.3px;top:1072px;width:16px;height:3px;background:#1a73d8;border-radius:1.5px;"></div><svg class="b" style="left:1304px;top:1044px;" width="22" height="25" viewBox="0 0 22 25"><rect x="1" y="1" width="20" height="23" rx="2" fill="#5a6a7a"/><rect x="3" y="3" width="16" height="4" fill="#4ab0e8"/><path d="M3 9H7V13H3ZM9 9H13V13H9ZM15 9H19V13H15ZM3 15H7V19H3ZM9 15H13V19H9ZM3 20H13V22H3Z" fill="#dfe6ec"/><rect x="15" y="15" width="4" height="7" fill="#2a5fa8"/></svg><div class="b" style="left:1312.0px;top:1072px;width:6px;height:3px;background:#8a8a8a;border-radius:1.5px;"></div><svg class="b" style="left:1347px;top:1044px;" width="24" height="24" viewBox="0 0 24 24"><rect x="1" y="1" width="22" height="22" rx="4" fill="#b30b00"/><path d="M6 17Q10 12 11 6Q12 4 12.5 7Q12 12 18 15Q19 16 16 16Q11 15 6 18Z" stroke="#fff" stroke-width="1.5" fill="none"/></svg><div class="b" style="left:1356.4px;top:1072px;width:6px;height:3px;background:#8a8a8a;border-radius:1.5px;"></div><svg class="b" style="left:1700px;top:1052px;" width="11" height="7" viewBox="0 0 11 7"><path d="M1 6L5.5 1.5L10 6" stroke="#1a1a1a" stroke-width="1.3" fill="none"/></svg><svg class="b" style="left:1731px;top:1047px;" width="13" height="18" viewBox="0 0 13 18"><rect x="4" y="1" width="5" height="10" rx="2.5" stroke="#2a5fc0" stroke-width="1.5" fill="none"/><path d="M1.5 8Q1.5 14 6.5 14Q11.5 14 11.5 8M6.5 14V17" stroke="#2a5fc0" stroke-width="1.5" fill="none"/></svg><svg class="b" style="left:1760px;top:1049px;" width="18" height="13" viewBox="0 0 18 13"><path d="M1 5A11 11 0 0 1 17 5M3.5 7.5A7.5 7.5 0 0 1 14.5 7.5M6 10A4 4 0 0 1 12 10" stroke="#1a1a1a" stroke-width="1.3" fill="none"/><circle cx="9" cy="12" r="1.3" fill="#1a1a1a"/></svg><svg class="b" style="left:1785px;top:1049px;" width="17" height="15" viewBox="0 0 17 15"><path d="M1 5H4L8 1.5V13.5L4 10H1Z" stroke="#1a1a1a" stroke-width="1.1" fill="none"/><path d="M10.5 5Q12 7.5 10.5 10M12.5 3Q15 7.5 12.5 12M14.5 1.5Q18 7.5 14.5 13.5" stroke="#1a1a1a" stroke-width="1.1" fill="none"/></svg><svg class="b" style="left:1808px;top:1047px;" width="22" height="15" viewBox="0 0 22 15"><rect x="1" y="4" width="18" height="10" rx="2" stroke="#1a1a1a" stroke-width="1.2" fill="#138a13"/><rect x="19.5" y="7" width="2" height="4" fill="#1a1a1a"/><path d="M11 1L8 8H11L9.5 12" stroke="#1a1a1a" stroke-width="1.3" fill="none"/></svg><div class="t" style="left:1900.50px;top:1042.50px;font-size:12.00px;color:#1a1a1a;transform:scaleX(0.9635);left:1851.00px;">12:19 PM</div><div class="t" style="left:1900.50px;top:1058.30px;font-size:12.00px;color:#1a1a1a;transform:scaleX(1.0301);left:1845.50px;">3/24/2026</div></body></html>
